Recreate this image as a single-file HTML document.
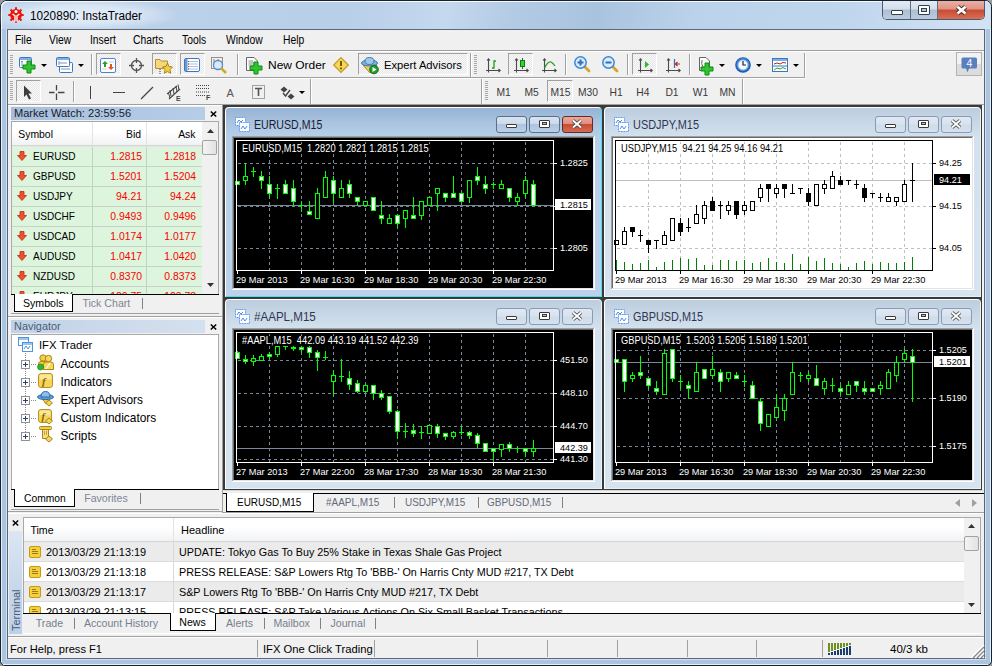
<!DOCTYPE html><html><head><meta charset="utf-8"><style>
html,body{margin:0;padding:0;}
body{width:992px;height:666px;overflow:hidden;background:#fff;}
#root{position:relative;width:992px;height:666px;overflow:hidden;font-family:"Liberation Sans",sans-serif;}
.t{position:absolute;white-space:nowrap;}
svg{overflow:visible;}
</style></head><body><div id="root">
<div style="position:absolute;left:0px;top:0px;width:992px;height:666px;background:#fff;"></div>
<div style="position:absolute;left:0px;top:0px;width:992px;height:666px;background:#9a9a9a;"></div>
<div style="position:absolute;left:0px;top:0px;width:992px;height:666px;box-sizing:border-box;border:1px solid #18222e;border-radius:7px 7px 5px 5px;background:#abc5e1;"></div>
<div style="position:absolute;left:1px;top:28px;width:1px;height:634px;background:#e6f0fb;"></div>
<div style="position:absolute;left:990px;top:28px;width:1px;height:634px;background:#e6f0fb;"></div>
<div style="position:absolute;left:3px;top:664px;width:985px;height:1px;background:#e6f0fb;"></div>
<div style="position:absolute;left:6px;top:28px;width:1px;height:632px;background:#d0e0f1;"></div>
<div style="position:absolute;left:985px;top:28px;width:1px;height:632px;background:#d0e0f1;"></div>
<div style="position:absolute;left:6px;top:659px;width:980px;height:1px;background:#d0e0f1;"></div>
<div style="position:absolute;left:1px;top:1px;width:990px;height:28px;border-radius:6px 6px 0 0;box-shadow:inset 1px 1px 0 rgba(255,255,255,0.85);background:linear-gradient(100deg,#bdd2ea 0%,#b9cfe8 35%,#c4d8ee 45%,#b3cae4 52%,#a9c3df 60%,#bcd2ea 70%,#c0d6ed 85%,#d3e3f4 100%);"></div>
<div style="position:absolute;left:0px;top:1px;width:180px;height:28px;background:radial-gradient(ellipse 55% 60% at 45% 50%,rgba(235,243,251,0.85) 0%,rgba(235,243,251,0.6) 55%,rgba(235,243,251,0) 100%);"></div>
<svg style="position:absolute;left:8px;top:7px;" width="16" height="16" viewBox="0 0 16 16"><g fill="#e8190f"><circle cx="8" cy="8" r="6"/>
<g stroke="#e8190f" stroke-width="2">
<line x1="8" y1="0.3" x2="8" y2="15.7"/><line x1="0.3" y1="8" x2="15.7" y2="8"/>
<line x1="2.5" y1="2.5" x2="13.5" y2="13.5"/><line x1="13.5" y1="2.5" x2="2.5" y2="13.5"/></g></g>
<circle cx="8" cy="4.5" r="1.5" fill="#fff"/>
<path d="M4.5 7 L7 8.8 L7 14.5 M11.5 7 L9 8.8 L9 14.5" stroke="#fff" stroke-width="1.4" fill="none"/></svg>
<div class="t " style="left:29.5px;top:10.00px;font-size:12.5px;line-height:12.5px;color:#000;transform:scaleX(0.94);transform-origin:0 0;">1020890: InstaTrader</div>
<div style="position:absolute;left:882px;top:1px;width:103px;height:19px;box-sizing:border-box;border:1px solid #4a5a6e;border-top:none;border-radius:0 0 5px 5px;overflow:hidden;background:#fff;"></div>
<div style="position:absolute;left:883px;top:1px;width:27px;height:18px;background:linear-gradient(180deg,#e3ebf4 0%,#d3deea 45%,#aebfd3 50%,#bccbdc 100%);border-radius:0 0 0 4px;"></div>
<div style="position:absolute;left:911px;top:1px;width:26px;height:18px;background:linear-gradient(180deg,#e3ebf4 0%,#d3deea 45%,#aebfd3 50%,#bccbdc 100%);"></div>
<div style="position:absolute;left:938px;top:1px;width:46px;height:18px;background:linear-gradient(180deg,#eab0a4 0%,#de9384 45%,#c94a32 50%,#d77056 100%);border-radius:0 0 4px 0;"></div>
<div style="position:absolute;left:910px;top:1px;width:1px;height:18px;background:#5d6c7e;"></div>
<div style="position:absolute;left:937px;top:1px;width:1px;height:18px;background:#5d6c7e;"></div>
<div style="position:absolute;left:891px;top:10px;width:12px;height:5px;box-sizing:border-box;border:1px solid #33404f;background:#fff;border-radius:1px;"></div>
<div style="position:absolute;left:918px;top:5px;width:12px;height:10px;box-sizing:border-box;border:1px solid #33404f;background:#fff;border-radius:1px;"></div>
<div style="position:absolute;left:921px;top:8px;width:6px;height:4px;box-sizing:border-box;border:1px solid #33404f;background:#b6c5d6;"></div>
<svg style="position:absolute;left:955px;top:5px;" width="13" height="10" viewBox="0 0 13 10"><path d="M2.5 1.8 L10.5 8.5 M10.5 1.8 L2.5 8.5" stroke="#4a2a24" stroke-width="4.6"/><path d="M2.5 1.8 L10.5 8.5 M10.5 1.8 L2.5 8.5" stroke="#fff" stroke-width="2.8"/></svg>
<div style="position:absolute;left:7px;top:29px;width:978px;height:630px;box-sizing:border-box;border:1px solid #5a6877;background:#f0f0f0;"></div>
<div class="t " style="left:15px;top:34.00px;font-size:12px;line-height:12px;color:#000;transform:scaleX(0.86);transform-origin:0 0;">File</div>
<div class="t " style="left:49px;top:34.00px;font-size:12px;line-height:12px;color:#000;transform:scaleX(0.86);transform-origin:0 0;">View</div>
<div class="t " style="left:90px;top:34.00px;font-size:12px;line-height:12px;color:#000;transform:scaleX(0.86);transform-origin:0 0;">Insert</div>
<div class="t " style="left:133px;top:34.00px;font-size:12px;line-height:12px;color:#000;transform:scaleX(0.86);transform-origin:0 0;">Charts</div>
<div class="t " style="left:182px;top:34.00px;font-size:12px;line-height:12px;color:#000;transform:scaleX(0.86);transform-origin:0 0;">Tools</div>
<div class="t " style="left:226px;top:34.00px;font-size:12px;line-height:12px;color:#000;transform:scaleX(0.86);transform-origin:0 0;">Window</div>
<div class="t " style="left:283px;top:34.00px;font-size:12px;line-height:12px;color:#000;transform:scaleX(0.86);transform-origin:0 0;">Help</div>
<div style="position:absolute;left:8px;top:50px;width:976px;height:1px;background:#a0a0a0;"></div>
<div style="position:absolute;left:8px;top:51px;width:976px;height:1px;background:#fff;"></div>
<div style="position:absolute;left:8px;top:77px;width:797px;height:1px;background:#a0a0a0;"></div>
<div style="position:absolute;left:8px;top:78px;width:797px;height:1px;background:#fff;"></div>
<svg style="position:absolute;left:10px;top:55px;" width="3" height="19" viewBox="0 0 3 19"><rect x="0" y="0" width="3" height="1" fill="#a8a8a8"/><rect x="0" y="2" width="3" height="1" fill="#a8a8a8"/><rect x="0" y="4" width="3" height="1" fill="#a8a8a8"/><rect x="0" y="6" width="3" height="1" fill="#a8a8a8"/><rect x="0" y="8" width="3" height="1" fill="#a8a8a8"/><rect x="0" y="10" width="3" height="1" fill="#a8a8a8"/><rect x="0" y="12" width="3" height="1" fill="#a8a8a8"/><rect x="0" y="14" width="3" height="1" fill="#a8a8a8"/><rect x="0" y="16" width="3" height="1" fill="#a8a8a8"/><rect x="0" y="18" width="3" height="1" fill="#a8a8a8"/></svg>
<svg style="position:absolute;left:19px;top:57px;" width="18" height="16" viewBox="0 0 18 16"><rect x="0.5" y="0.5" width="12" height="10" rx="1" fill="#fff" stroke="#3b78c2"/>
<rect x="1" y="1" width="11" height="2" fill="#7eaee6"/>
<path d="M3 4 V9 M2 5 L3 4 L4 5" stroke="#7c97b3" fill="none"/>
<path d="M8 4 H12 V8 H16 V12 H12 V16 H8 V12 H4 V8 H8 Z" fill="#2fc52f" stroke="#0f8a0f"/></svg>
<svg style="position:absolute;left:41px;top:64px;" width="6" height="3" viewBox="0 0 6 3"><path d="M0 0 H6 L3 3 Z" fill="#000"/></svg>
<svg style="position:absolute;left:56px;top:57px;" width="18" height="17" viewBox="0 0 18 17"><rect x="3.5" y="5.5" width="13" height="10" rx="1" fill="#fff" stroke="#3b78c2"/>
<rect x="0.5" y="0.5" width="13" height="9" rx="1" fill="#fff" stroke="#3b78c2"/>
<rect x="1" y="1" width="12" height="2" fill="#7eaee6"/>
<path d="M3 4 V8 M3 6 H11 M5 12 H14" stroke="#7c97b3" fill="none"/></svg>
<svg style="position:absolute;left:78px;top:64px;" width="6" height="3" viewBox="0 0 6 3"><path d="M0 0 H6 L3 3 Z" fill="#000"/></svg>
<div style="position:absolute;left:91px;top:54px;width:1px;height:21px;background:#a0a0a0;"></div>
<div style="position:absolute;left:92px;top:54px;width:1px;height:21px;background:#fff;"></div>
<div style="position:absolute;left:96px;top:53px;width:25px;height:22px;box-sizing:border-box;border-top:1px solid #a0a0a0;border-left:1px solid #a0a0a0;border-bottom:1px solid #fff;border-right:1px solid #fff;background:repeating-conic-gradient(#fafafa 0 25%,#e6e6e6 0 50%) 0 0/2px 2px;"></div>
<svg style="position:absolute;left:100px;top:58px;" width="16" height="15" viewBox="0 0 16 15"><rect x="0.5" y="0.5" width="15" height="14" rx="1.5" fill="#fff" stroke="#4a86cf"/>
<path d="M5 3 L8 6 H6 V9 H4 V6 H2 Z" fill="#2a9d2a"/>
<path d="M11 12 L14 9 H12 V6 H10 V9 H8 Z" fill="#e2571e"/>
<path d="M9 4 H14 M2 11 H7" stroke="#ccc"/></svg>
<svg style="position:absolute;left:129px;top:58px;" width="15" height="15" viewBox="0 0 15 15"><circle cx="7.5" cy="7.5" r="5" fill="none" stroke="#555" stroke-width="1.3"/>
<path d="M7.5 0 V5 M7.5 10 V15 M0 7.5 H5 M10 7.5 H15" stroke="#555" stroke-width="1.3"/></svg>
<div style="position:absolute;left:152px;top:53px;width:25px;height:22px;box-sizing:border-box;border-top:1px solid #a0a0a0;border-left:1px solid #a0a0a0;border-bottom:1px solid #fff;border-right:1px solid #fff;background:repeating-conic-gradient(#fafafa 0 25%,#e6e6e6 0 50%) 0 0/2px 2px;"></div>
<svg style="position:absolute;left:155px;top:57px;" width="18" height="17" viewBox="0 0 18 17"><path d="M0.5 2.5 H5 L6.5 4 H12.5 V11.5 H0.5 Z" fill="#f3d77a" stroke="#b8902a"/>
<path d="M12.5 6 L14 9.5 L17.5 10 L15 12.5 L15.6 16.3 L12.5 14.5 L9.4 16.3 L10 12.5 L7.5 10 L11 9.5 Z" fill="#f2cf3d" stroke="#a98417"/>
<path d="M5 12 V17" stroke="#333" stroke-dasharray="1 1"/></svg>
<div style="position:absolute;left:180px;top:53px;width:25px;height:22px;box-sizing:border-box;border-top:1px solid #a0a0a0;border-left:1px solid #a0a0a0;border-bottom:1px solid #fff;border-right:1px solid #fff;background:repeating-conic-gradient(#fafafa 0 25%,#e6e6e6 0 50%) 0 0/2px 2px;"></div>
<svg style="position:absolute;left:184px;top:58px;" width="16" height="14" viewBox="0 0 16 14"><rect x="0.5" y="0.5" width="15" height="13" rx="1.5" fill="#fff" stroke="#3b78c2"/>
<rect x="1" y="1" width="2.5" height="12" fill="#6b98cf"/>
<path d="M5 3.5 H14 M5 6 H14 M5 8.5 H14 M5 11 H14" stroke="#a9c3e3"/>
<path d="M4 3.5 H5 M4 8.5 H5" stroke="#e21"/><path d="M4 6 H5 M4 11 H5" stroke="#222"/></svg>
<svg style="position:absolute;left:211px;top:57px;" width="19" height="18" viewBox="0 0 19 18"><rect x="0.5" y="0.5" width="11" height="11" fill="#f2efe8" stroke="#9a8f80"/>
<path d="M3 2 V9 M7 2 V9" stroke="#888"/>
<circle cx="7" cy="8" r="4.5" fill="#dbe9f7" stroke="#4d8fd6" stroke-width="1.3"/>
<path d="M10 11 L15 16" stroke="#d4a92a" stroke-width="2.5"/></svg>
<div style="position:absolute;left:237px;top:54px;width:1px;height:21px;background:#a0a0a0;"></div>
<div style="position:absolute;left:238px;top:54px;width:1px;height:21px;background:#fff;"></div>
<svg style="position:absolute;left:246px;top:57px;" width="18" height="18" viewBox="0 0 18 18"><path d="M0.5 0.5 H8 L11.5 4 V13.5 H0.5 Z" fill="#fff" stroke="#666"/>
<path d="M2.5 4 H7 M2.5 6 H9 M2.5 8 H9" stroke="#888"/>
<path d="M8 5 H12 V9 H16 V13 H12 V17 H8 V13 H4 V9 H8 Z" fill="#2fc52f" stroke="#0f8a0f"/></svg>
<div class="t " style="left:267.8px;top:60.00px;font-size:11.5px;line-height:11.5px;color:#000;transform:scaleX(1.04);transform-origin:0 0;">New Order</div>
<svg style="position:absolute;left:333px;top:57px;" width="16" height="16" viewBox="0 0 16 16"><path d="M8 0.7 L15.3 8 L8 15.3 L0.7 8 Z" fill="#f5d55a" stroke="#c79a1a" stroke-width="1.2"/>
<path d="M8 4 V9" stroke="#6b4a00" stroke-width="1.8"/><rect x="7.1" y="10.5" width="1.8" height="1.8" fill="#6b4a00"/></svg>
<div style="position:absolute;left:358px;top:53px;width:110px;height:22px;box-sizing:border-box;border-top:1px solid #a0a0a0;border-left:1px solid #a0a0a0;border-bottom:1px solid #fff;border-right:1px solid #fff;background:repeating-conic-gradient(#fafafa 0 25%,#e6e6e6 0 50%) 0 0/2px 2px;"></div>
<svg style="position:absolute;left:361px;top:57px;" width="18" height="17" viewBox="0 0 18 17"><path d="M2 8 L9 16 L16 8 Z" fill="#f1cf55" stroke="#b08a1c"/>
<ellipse cx="8.5" cy="6" rx="8" ry="3" fill="#7fb2dd" stroke="#3f78ad"/>
<ellipse cx="8.5" cy="4" rx="4.5" ry="3.5" fill="#9cc6ea" stroke="#3f78ad"/>
<circle cx="13" cy="12.5" r="4.3" fill="#1e9d2e" stroke="#0c6b17"/>
<path d="M11.5 10 L15.5 12.5 L11.5 15 Z" fill="#fff"/></svg>
<div class="t " style="left:383.5px;top:60.00px;font-size:11.1px;line-height:11.1px;color:#000;transform:scaleX(1.01);transform-origin:0 0;">Expert Advisors</div>
<div style="position:absolute;left:470px;top:53px;width:1px;height:24px;background:#a0a0a0;"></div>
<div style="position:absolute;left:471px;top:53px;width:1px;height:24px;background:#fff;"></div>
<svg style="position:absolute;left:474px;top:55px;" width="3" height="19" viewBox="0 0 3 19"><rect x="0" y="0" width="3" height="1" fill="#a8a8a8"/><rect x="0" y="2" width="3" height="1" fill="#a8a8a8"/><rect x="0" y="4" width="3" height="1" fill="#a8a8a8"/><rect x="0" y="6" width="3" height="1" fill="#a8a8a8"/><rect x="0" y="8" width="3" height="1" fill="#a8a8a8"/><rect x="0" y="10" width="3" height="1" fill="#a8a8a8"/><rect x="0" y="12" width="3" height="1" fill="#a8a8a8"/><rect x="0" y="14" width="3" height="1" fill="#a8a8a8"/><rect x="0" y="16" width="3" height="1" fill="#a8a8a8"/><rect x="0" y="18" width="3" height="1" fill="#a8a8a8"/></svg>
<svg style="position:absolute;left:486px;top:58px;" width="15" height="15" viewBox="0 0 15 15"><path d="M2.5 0.5 V14.5 M0 12.5 H14.5 M1 2.5 L2.5 0.8 L4 2.5 M12.5 11 L14.2 12.5 L12.5 14" stroke="#4a4a4a" stroke-width="1.1" fill="none"/><path d="M6 10 H8 V3 H10" stroke="#1f9a1f" stroke-width="1.3" fill="none"/></svg>
<div style="position:absolute;left:508px;top:53px;width:25px;height:22px;box-sizing:border-box;border-top:1px solid #a0a0a0;border-left:1px solid #a0a0a0;border-bottom:1px solid #fff;border-right:1px solid #fff;background:repeating-conic-gradient(#fafafa 0 25%,#e6e6e6 0 50%) 0 0/2px 2px;"></div>
<svg style="position:absolute;left:514px;top:58px;" width="15" height="15" viewBox="0 0 15 15"><path d="M2.5 0.5 V14.5 M0 12.5 H14.5 M1 2.5 L2.5 0.8 L4 2.5 M12.5 11 L14.2 12.5 L12.5 14" stroke="#4a4a4a" stroke-width="1.1" fill="none"/><path d="M8.5 0 V11" stroke="#1f7a1f"/><rect x="6.5" y="2.5" width="4" height="6" fill="#2bd92b" stroke="#157a15"/></svg>
<svg style="position:absolute;left:542px;top:58px;" width="15" height="15" viewBox="0 0 15 15"><path d="M2.5 0.5 V14.5 M0 12.5 H14.5 M1 2.5 L2.5 0.8 L4 2.5 M12.5 11 L14.2 12.5 L12.5 14" stroke="#4a4a4a" stroke-width="1.1" fill="none"/><path d="M2.5 10 Q6 3 9 4 Q11 5 13 8" stroke="#2a9d2a" stroke-width="1.3" fill="none"/></svg>
<div style="position:absolute;left:565px;top:54px;width:1px;height:21px;background:#a0a0a0;"></div>
<div style="position:absolute;left:566px;top:54px;width:1px;height:21px;background:#fff;"></div>
<svg style="position:absolute;left:574px;top:56px;" width="17" height="17" viewBox="0 0 17 17"><path d="M9.5 9.5 L15 15" stroke="#d2a628" stroke-width="2.8" stroke-linecap="round"/>
<circle cx="6.5" cy="6.5" r="5.7" fill="#dcebf9" stroke="#3a86d6" stroke-width="1.5"/>
<path d="M6.5 3.5 V9.5 M3.5 6.5 H9.5" stroke="#2f6fb8" stroke-width="2"/></svg>
<svg style="position:absolute;left:602px;top:56px;" width="17" height="17" viewBox="0 0 17 17"><path d="M9.5 9.5 L15 15" stroke="#d2a628" stroke-width="2.8" stroke-linecap="round"/>
<circle cx="6.5" cy="6.5" r="5.7" fill="#dcebf9" stroke="#3a86d6" stroke-width="1.5"/>
<path d="M3.5 6.5 H9.5" stroke="#2f6fb8" stroke-width="2"/></svg>
<div style="position:absolute;left:627px;top:54px;width:1px;height:21px;background:#a0a0a0;"></div>
<div style="position:absolute;left:628px;top:54px;width:1px;height:21px;background:#fff;"></div>
<div style="position:absolute;left:632px;top:53px;width:25px;height:22px;box-sizing:border-box;border-top:1px solid #a0a0a0;border-left:1px solid #a0a0a0;border-bottom:1px solid #fff;border-right:1px solid #fff;background:repeating-conic-gradient(#fafafa 0 25%,#e6e6e6 0 50%) 0 0/2px 2px;"></div>
<svg style="position:absolute;left:638px;top:58px;" width="15" height="15" viewBox="0 0 15 15"><path d="M2.5 0.5 V14.5 M0 12.5 H14.5 M1 2.5 L2.5 0.8 L4 2.5 M12.5 11 L14.2 12.5 L12.5 14" stroke="#4a4a4a" stroke-width="1.1" fill="none"/><path d="M7 3 L11 6.5 L7 10 Z" fill="#2bb82b"/></svg>
<svg style="position:absolute;left:666px;top:58px;" width="15" height="15" viewBox="0 0 15 15"><path d="M2.5 0.5 V14.5 M0 12.5 H14.5 M1 2.5 L2.5 0.8 L4 2.5 M12.5 11 L14.2 12.5 L12.5 14" stroke="#4a4a4a" stroke-width="1.1" fill="none"/><path d="M8.5 1 V10" stroke="#2a6fc0" stroke-width="1.2"/><path d="M14 6 H10 M11.5 4 L9.5 6 L11.5 8" stroke="#cc2200" stroke-width="1.2" fill="none"/></svg>
<div style="position:absolute;left:689px;top:54px;width:1px;height:21px;background:#a0a0a0;"></div>
<div style="position:absolute;left:690px;top:54px;width:1px;height:21px;background:#fff;"></div>
<svg style="position:absolute;left:699px;top:57px;" width="16" height="18" viewBox="0 0 16 18"><path d="M0.5 0.5 H7 L10.5 4 V13.5 H0.5 Z" fill="#fff" stroke="#666"/>
<path d="M3 3 Q2 7 4 10" stroke="#666" fill="none"/>
<path d="M6 6 H10 V10 H14 V14 H10 V18 H6 V14 H2 V10 H6 Z" fill="#2fc52f" stroke="#0f8a0f"/></svg>
<svg style="position:absolute;left:719px;top:64px;" width="6" height="3" viewBox="0 0 6 3"><path d="M0 0 H6 L3 3 Z" fill="#000"/></svg>
<svg style="position:absolute;left:735px;top:57px;" width="16" height="16" viewBox="0 0 16 16"><circle cx="8" cy="8" r="7.8" fill="#1b5cae"/><circle cx="8" cy="7.6" r="6.6" fill="#3f86d8"/><circle cx="8" cy="8" r="4.9" fill="#f6f9fd" stroke="#9cc0ea" stroke-width="0.8"/>
<path d="M8 4 V8 H11" stroke="#222" stroke-width="1.2" fill="none"/></svg>
<svg style="position:absolute;left:756px;top:64px;" width="6" height="3" viewBox="0 0 6 3"><path d="M0 0 H6 L3 3 Z" fill="#000"/></svg>
<svg style="position:absolute;left:772px;top:58px;" width="16" height="14" viewBox="0 0 16 14"><rect x="0.5" y="0.5" width="15" height="13" fill="#fff" stroke="#3b78c2"/>
<rect x="1" y="1" width="14" height="2" fill="#7eaee6"/><path d="M1 8 H15" stroke="#3b78c2"/>
<path d="M2 6 L5 5 L8 6 L11 4.5 L14 5" stroke="#b22" fill="none"/>
<path d="M2 12 L5 10 L8 11 L11 9.5 L14 11" stroke="#2a2" fill="none"/></svg>
<svg style="position:absolute;left:793px;top:64px;" width="6" height="3" viewBox="0 0 6 3"><path d="M0 0 H6 L3 3 Z" fill="#000"/></svg>
<div style="position:absolute;left:804px;top:53px;width:1px;height:24px;background:#a0a0a0;"></div>
<div style="position:absolute;left:805px;top:53px;width:1px;height:24px;background:#fff;"></div>
<div style="position:absolute;left:956px;top:52px;width:26px;height:24px;box-sizing:border-box;border:1px solid #b3b3b3;background:linear-gradient(180deg,#f2f2f2 0 50%,#dcdcdc 50% 100%);"></div>
<svg style="position:absolute;left:961px;top:57px;" width="17" height="17" viewBox="0 0 17 17"><path d="M2 0.5 H14.5 Q16 0.5 16 2 V10 Q16 11.5 14.5 11.5 H8 L6.5 15.5 L5 11.5 H2 Q0.5 11.5 0.5 10 V2 Q0.5 0.5 2 0.5 Z" fill="#5b7fbd"/><text x="8.3" y="9.6" font-size="10.5" fill="#fff" text-anchor="middle" font-family="Liberation Sans">4</text></svg>
<svg style="position:absolute;left:10px;top:81px;" width="3" height="20" viewBox="0 0 3 20"><rect x="0" y="0" width="3" height="1" fill="#a8a8a8"/><rect x="0" y="2" width="3" height="1" fill="#a8a8a8"/><rect x="0" y="4" width="3" height="1" fill="#a8a8a8"/><rect x="0" y="6" width="3" height="1" fill="#a8a8a8"/><rect x="0" y="8" width="3" height="1" fill="#a8a8a8"/><rect x="0" y="10" width="3" height="1" fill="#a8a8a8"/><rect x="0" y="12" width="3" height="1" fill="#a8a8a8"/><rect x="0" y="14" width="3" height="1" fill="#a8a8a8"/><rect x="0" y="16" width="3" height="1" fill="#a8a8a8"/><rect x="0" y="18" width="3" height="1" fill="#a8a8a8"/></svg>
<div style="position:absolute;left:16px;top:80px;width:25px;height:22px;box-sizing:border-box;border-top:1px solid #a0a0a0;border-left:1px solid #a0a0a0;border-bottom:1px solid #fff;border-right:1px solid #fff;background:repeating-conic-gradient(#fafafa 0 25%,#e6e6e6 0 50%) 0 0/2px 2px;"></div>
<svg style="position:absolute;left:23px;top:85px;" width="10" height="15" viewBox="0 0 10 15"><path d="M1 0.5 L9 8.5 L5.5 8.5 L8 13.5 L6 14.5 L3.5 9.5 L1 12 Z" fill="#3c3c3c"/></svg>
<svg style="position:absolute;left:49px;top:85px;" width="16" height="15" viewBox="0 0 16 15"><path d="M7.5 0 V5.5 M7.5 8.5 V15 M0 7.5 H5.5 M9 7.5 H15.5" stroke="#444" stroke-width="1.3"/></svg>
<div style="position:absolute;left:73px;top:81px;width:1px;height:21px;background:#a0a0a0;"></div>
<div style="position:absolute;left:74px;top:81px;width:1px;height:21px;background:#fff;"></div>
<div style="position:absolute;left:90px;top:86px;width:1px;height:13px;background:#444;"></div>
<div style="position:absolute;left:113px;top:92px;width:12px;height:1px;background:#444;"></div>
<svg style="position:absolute;left:140px;top:86px;" width="14" height="14" viewBox="0 0 14 14"><path d="M1 13 L13 1" stroke="#444" stroke-width="1.2"/></svg>
<svg style="position:absolute;left:166px;top:84px;" width="17" height="18" viewBox="0 0 17 18"><path d="M1 10 L11 2 M3 15 L14 5" stroke="#444" stroke-width="1.1" fill="none"/>
<path d="M4 6 L5 12 M7 4 L8 10 M10 2 L11 8 M2.5 9 L4 14" stroke="#444" stroke-width="1" fill="none"/>
<path d="M12 0.5 L13 6" stroke="#444"/>
<text x="10" y="17" font-size="7" font-weight="bold" fill="#444" font-family="Liberation Sans">E</text></svg>
<svg style="position:absolute;left:196px;top:85px;" width="15" height="16" viewBox="0 0 15 16"><path d="M0 0.5 H13 M0 3.5 H13 M0 7 H13 M0 10.5 H10" stroke="#444" stroke-dasharray="1 1" fill="none"/>
<text x="10" y="15" font-size="7" font-weight="bold" fill="#444" font-family="Liberation Sans">F</text></svg>
<div class="t " style="left:226.5px;top:88.00px;font-size:11px;line-height:11px;color:#555;">A</div>
<svg style="position:absolute;left:252px;top:85px;" width="14" height="14" viewBox="0 0 14 14"><rect x="0.5" y="0.5" width="12" height="13" fill="none" stroke="#555" stroke-dasharray="1 1"/>
<path d="M3 3.5 H10 M6.5 3.5 V11" stroke="#555" stroke-width="1.6"/></svg>
<svg style="position:absolute;left:280px;top:86px;" width="15" height="14" viewBox="0 0 15 14"><path d="M4 0.5 L7.5 3.5 L4 6.5 L0.5 3.5 Z M11 7.5 L14.5 10.5 L11 13.5 L7.5 10.5 Z" fill="#444"/>
<path d="M3 7 L5.5 10 L10 4" stroke="#444" stroke-width="1.4" fill="none"/></svg>
<svg style="position:absolute;left:299px;top:91px;" width="6" height="3" viewBox="0 0 6 3"><path d="M0 0 H6 L3 3 Z" fill="#000"/></svg>
<div style="position:absolute;left:310px;top:79px;width:1px;height:25px;background:#a0a0a0;"></div>
<div style="position:absolute;left:311px;top:79px;width:1px;height:25px;background:#fff;"></div>
<div style="position:absolute;left:481px;top:79px;width:1px;height:25px;background:#a0a0a0;"></div>
<div style="position:absolute;left:482px;top:79px;width:1px;height:25px;background:#fff;"></div>
<svg style="position:absolute;left:485px;top:81px;" width="3" height="20" viewBox="0 0 3 20"><rect x="0" y="0" width="3" height="1" fill="#a8a8a8"/><rect x="0" y="2" width="3" height="1" fill="#a8a8a8"/><rect x="0" y="4" width="3" height="1" fill="#a8a8a8"/><rect x="0" y="6" width="3" height="1" fill="#a8a8a8"/><rect x="0" y="8" width="3" height="1" fill="#a8a8a8"/><rect x="0" y="10" width="3" height="1" fill="#a8a8a8"/><rect x="0" y="12" width="3" height="1" fill="#a8a8a8"/><rect x="0" y="14" width="3" height="1" fill="#a8a8a8"/><rect x="0" y="16" width="3" height="1" fill="#a8a8a8"/><rect x="0" y="18" width="3" height="1" fill="#a8a8a8"/></svg>
<div style="position:absolute;left:547px;top:80px;width:26px;height:22px;box-sizing:border-box;border-top:1px solid #a0a0a0;border-left:1px solid #a0a0a0;border-bottom:1px solid #fff;border-right:1px solid #fff;background:repeating-conic-gradient(#fafafa 0 25%,#e6e6e6 0 50%) 0 0/2px 2px;"></div>
<div class="t " style="left:496.5px;top:88.00px;font-size:10.3px;line-height:10.3px;color:#3a3a3a;">M1</div>
<div class="t " style="left:524.5px;top:88.00px;font-size:10.3px;line-height:10.3px;color:#3a3a3a;">M5</div>
<div class="t " style="left:550.5px;top:88.00px;font-size:10.3px;line-height:10.3px;color:#3a3a3a;">M15</div>
<div class="t " style="left:578px;top:88.00px;font-size:10.3px;line-height:10.3px;color:#3a3a3a;">M30</div>
<div class="t " style="left:609.5px;top:88.00px;font-size:10.3px;line-height:10.3px;color:#3a3a3a;">H1</div>
<div class="t " style="left:636.3px;top:88.00px;font-size:10.3px;line-height:10.3px;color:#3a3a3a;">H4</div>
<div class="t " style="left:665.4px;top:88.00px;font-size:10.3px;line-height:10.3px;color:#3a3a3a;">D1</div>
<div class="t " style="left:692.8px;top:88.00px;font-size:10.3px;line-height:10.3px;color:#3a3a3a;">W1</div>
<div class="t " style="left:719.5px;top:88.00px;font-size:10.3px;line-height:10.3px;color:#3a3a3a;">MN</div>
<div style="position:absolute;left:742px;top:79px;width:1px;height:25px;background:#a0a0a0;"></div>
<div style="position:absolute;left:743px;top:79px;width:1px;height:25px;background:#fff;"></div>
<div style="position:absolute;left:8px;top:104px;width:215px;height:1px;background:#a0a0a0;"></div>
<div style="position:absolute;left:8px;top:105px;width:215px;height:1px;background:#fff;"></div>
<div style="position:absolute;left:11px;top:107px;width:194px;height:13px;background:linear-gradient(90deg,#a6bedb,#b0c8e3 60%,#b5cde7);"></div>
<div class="t " style="left:13.5px;top:109.00px;font-size:10.4px;line-height:10.4px;color:#1a1a2a;transform:scaleX(1.065);transform-origin:0 0;">Market Watch: 23:59:56</div>
<svg style="position:absolute;left:210px;top:111px;" width="7" height="6" viewBox="0 0 7 6"><path d="M0.8 0.5 L6.2 5.5 M6.2 0.5 L0.8 5.5" stroke="#000" stroke-width="1.5"/></svg>
<div style="position:absolute;left:11px;top:121px;width:208px;height:173px;box-sizing:border-box;border:1px solid #a9a9a9;border-bottom:none;background:#fff;"></div>
<div style="position:absolute;left:12px;top:122px;width:190px;height:23px;background:linear-gradient(180deg,#ffffff 0%,#ffffff 40%,#f1f2f4 100%);"></div>
<div style="position:absolute;left:12px;top:145px;width:190px;height:1px;background:#d5d5d5;"></div>
<div style="position:absolute;left:12px;top:146px;width:190px;height:1px;background:#e6e6e6;"></div>
<div style="position:absolute;left:92px;top:122px;width:1px;height:23px;background:#e3e3e3;"></div>
<div style="position:absolute;left:146px;top:122px;width:1px;height:23px;background:#e3e3e3;"></div>
<div class="t " style="left:18.3px;top:130.00px;font-size:10.4px;line-height:10.4px;color:#000;">Symbol</div>
<div class="t " style="right:851px;top:130.00px;font-size:10.4px;line-height:10.4px;color:#000;">Bid</div>
<div class="t " style="right:796.5px;top:130.00px;font-size:10.4px;line-height:10.4px;color:#000;">Ask</div>
<div style="position:absolute;left:12px;top:147px;width:190px;height:147px;overflow:hidden;">
<div style="position:absolute;left:0;top:0px;width:190px;height:20px;background:#dcf5dc;box-shadow:inset 0 -1px 0 #c8d2c8;"></div>
<div style="position:absolute;left:80px;top:0px;width:1px;height:20px;background:#c5cfc5;"></div>
<div style="position:absolute;left:134px;top:0px;width:1px;height:20px;background:#c5cfc5;"></div>
<svg style="position:absolute;left:5px;top:4px" width="10" height="10" viewBox="0 0 10 10"><path d="M3 0.5 H7 V4.5 H9.5 L5 9.5 L0.5 4.5 H3 Z" fill="#f0502a" stroke="#b8301a" stroke-width="0.8"/></svg>
<div class="t" style="left:20.6px;top:5px;font-size:10.4px;line-height:10.4px;color:#000;transform:scaleX(0.97);transform-origin:0 0;">EURUSD</div>
<div class="t" style="right:60px;top:5px;font-size:10.4px;line-height:10.4px;color:#f00;">1.2815</div>
<div class="t" style="right:6px;top:5px;font-size:10.4px;line-height:10.4px;color:#f00;">1.2818</div>
<div style="position:absolute;left:0;top:20px;width:190px;height:20px;background:#dcf5dc;box-shadow:inset 0 -1px 0 #c8d2c8;"></div>
<div style="position:absolute;left:80px;top:20px;width:1px;height:20px;background:#c5cfc5;"></div>
<div style="position:absolute;left:134px;top:20px;width:1px;height:20px;background:#c5cfc5;"></div>
<svg style="position:absolute;left:5px;top:24px" width="10" height="10" viewBox="0 0 10 10"><path d="M3 0.5 H7 V4.5 H9.5 L5 9.5 L0.5 4.5 H3 Z" fill="#f0502a" stroke="#b8301a" stroke-width="0.8"/></svg>
<div class="t" style="left:20.6px;top:25px;font-size:10.4px;line-height:10.4px;color:#000;transform:scaleX(0.97);transform-origin:0 0;">GBPUSD</div>
<div class="t" style="right:60px;top:25px;font-size:10.4px;line-height:10.4px;color:#f00;">1.5201</div>
<div class="t" style="right:6px;top:25px;font-size:10.4px;line-height:10.4px;color:#f00;">1.5204</div>
<div style="position:absolute;left:0;top:40px;width:190px;height:20px;background:#dcf5dc;box-shadow:inset 0 -1px 0 #c8d2c8;"></div>
<div style="position:absolute;left:80px;top:40px;width:1px;height:20px;background:#c5cfc5;"></div>
<div style="position:absolute;left:134px;top:40px;width:1px;height:20px;background:#c5cfc5;"></div>
<svg style="position:absolute;left:5px;top:44px" width="10" height="10" viewBox="0 0 10 10"><path d="M3 0.5 H7 V4.5 H9.5 L5 9.5 L0.5 4.5 H3 Z" fill="#f0502a" stroke="#b8301a" stroke-width="0.8"/></svg>
<div class="t" style="left:20.6px;top:45px;font-size:10.4px;line-height:10.4px;color:#000;transform:scaleX(0.97);transform-origin:0 0;">USDJPY</div>
<div class="t" style="right:60px;top:45px;font-size:10.4px;line-height:10.4px;color:#f00;">94.21</div>
<div class="t" style="right:6px;top:45px;font-size:10.4px;line-height:10.4px;color:#f00;">94.24</div>
<div style="position:absolute;left:0;top:60px;width:190px;height:20px;background:#dcf5dc;box-shadow:inset 0 -1px 0 #c8d2c8;"></div>
<div style="position:absolute;left:80px;top:60px;width:1px;height:20px;background:#c5cfc5;"></div>
<div style="position:absolute;left:134px;top:60px;width:1px;height:20px;background:#c5cfc5;"></div>
<svg style="position:absolute;left:5px;top:64px" width="10" height="10" viewBox="0 0 10 10"><path d="M3 0.5 H7 V4.5 H9.5 L5 9.5 L0.5 4.5 H3 Z" fill="#f0502a" stroke="#b8301a" stroke-width="0.8"/></svg>
<div class="t" style="left:20.6px;top:65px;font-size:10.4px;line-height:10.4px;color:#000;transform:scaleX(0.97);transform-origin:0 0;">USDCHF</div>
<div class="t" style="right:60px;top:65px;font-size:10.4px;line-height:10.4px;color:#f00;">0.9493</div>
<div class="t" style="right:6px;top:65px;font-size:10.4px;line-height:10.4px;color:#f00;">0.9496</div>
<div style="position:absolute;left:0;top:80px;width:190px;height:20px;background:#dcf5dc;box-shadow:inset 0 -1px 0 #c8d2c8;"></div>
<div style="position:absolute;left:80px;top:80px;width:1px;height:20px;background:#c5cfc5;"></div>
<div style="position:absolute;left:134px;top:80px;width:1px;height:20px;background:#c5cfc5;"></div>
<svg style="position:absolute;left:5px;top:84px" width="10" height="10" viewBox="0 0 10 10"><path d="M3 0.5 H7 V4.5 H9.5 L5 9.5 L0.5 4.5 H3 Z" fill="#f0502a" stroke="#b8301a" stroke-width="0.8"/></svg>
<div class="t" style="left:20.6px;top:85px;font-size:10.4px;line-height:10.4px;color:#000;transform:scaleX(0.97);transform-origin:0 0;">USDCAD</div>
<div class="t" style="right:60px;top:85px;font-size:10.4px;line-height:10.4px;color:#f00;">1.0174</div>
<div class="t" style="right:6px;top:85px;font-size:10.4px;line-height:10.4px;color:#f00;">1.0177</div>
<div style="position:absolute;left:0;top:100px;width:190px;height:20px;background:#dcf5dc;box-shadow:inset 0 -1px 0 #c8d2c8;"></div>
<div style="position:absolute;left:80px;top:100px;width:1px;height:20px;background:#c5cfc5;"></div>
<div style="position:absolute;left:134px;top:100px;width:1px;height:20px;background:#c5cfc5;"></div>
<svg style="position:absolute;left:5px;top:104px" width="10" height="10" viewBox="0 0 10 10"><path d="M3 0.5 H7 V4.5 H9.5 L5 9.5 L0.5 4.5 H3 Z" fill="#f0502a" stroke="#b8301a" stroke-width="0.8"/></svg>
<div class="t" style="left:20.6px;top:105px;font-size:10.4px;line-height:10.4px;color:#000;transform:scaleX(0.97);transform-origin:0 0;">AUDUSD</div>
<div class="t" style="right:60px;top:105px;font-size:10.4px;line-height:10.4px;color:#f00;">1.0417</div>
<div class="t" style="right:6px;top:105px;font-size:10.4px;line-height:10.4px;color:#f00;">1.0420</div>
<div style="position:absolute;left:0;top:120px;width:190px;height:20px;background:#dcf5dc;box-shadow:inset 0 -1px 0 #c8d2c8;"></div>
<div style="position:absolute;left:80px;top:120px;width:1px;height:20px;background:#c5cfc5;"></div>
<div style="position:absolute;left:134px;top:120px;width:1px;height:20px;background:#c5cfc5;"></div>
<svg style="position:absolute;left:5px;top:124px" width="10" height="10" viewBox="0 0 10 10"><path d="M3 0.5 H7 V4.5 H9.5 L5 9.5 L0.5 4.5 H3 Z" fill="#f0502a" stroke="#b8301a" stroke-width="0.8"/></svg>
<div class="t" style="left:20.6px;top:125px;font-size:10.4px;line-height:10.4px;color:#000;transform:scaleX(0.97);transform-origin:0 0;">NZDUSD</div>
<div class="t" style="right:60px;top:125px;font-size:10.4px;line-height:10.4px;color:#f00;">0.8370</div>
<div class="t" style="right:6px;top:125px;font-size:10.4px;line-height:10.4px;color:#f00;">0.8373</div>
<div style="position:absolute;left:0;top:140px;width:190px;height:20px;background:#dcf5dc;box-shadow:inset 0 -1px 0 #c8d2c8;"></div>
<div style="position:absolute;left:80px;top:140px;width:1px;height:20px;background:#c5cfc5;"></div>
<div style="position:absolute;left:134px;top:140px;width:1px;height:20px;background:#c5cfc5;"></div>
<svg style="position:absolute;left:5px;top:144px" width="10" height="10" viewBox="0 0 10 10"><path d="M3 0.5 H7 V4.5 H9.5 L5 9.5 L0.5 4.5 H3 Z" fill="#f0502a" stroke="#b8301a" stroke-width="0.8"/></svg>
<div class="t" style="left:20.6px;top:145px;font-size:10.4px;line-height:10.4px;color:#000;transform:scaleX(0.97);transform-origin:0 0;">EURJPY</div>
<div class="t" style="right:60px;top:145px;font-size:10.4px;line-height:10.4px;color:#f00;">120.75</div>
<div class="t" style="right:6px;top:145px;font-size:10.4px;line-height:10.4px;color:#f00;">120.78</div>
</div>
<div style="position:absolute;left:202px;top:122px;width:16px;height:172px;background:#f0f0f0;"></div>
<svg style="position:absolute;left:207px;top:129px;" width="7" height="4" viewBox="0 0 7 4"><path d="M0 4 L3.5 0 L7 4 Z" fill="#333"/></svg>
<div style="position:absolute;left:202px;top:140px;width:15px;height:15px;box-sizing:border-box;border:1px solid #a2a2a2;border-radius:2px;background:linear-gradient(90deg,#f4f4f4,#e2e2e2);"></div>
<svg style="position:absolute;left:207px;top:283px;" width="7" height="4" viewBox="0 0 7 4"><path d="M0 0 L3.5 4 L7 0 Z" fill="#333"/></svg>
<div style="position:absolute;left:11px;top:294px;width:208px;height:19px;background:#f0f0f0;"></div>
<div style="position:absolute;left:11px;top:294px;width:208px;height:1px;background:#000;"></div>
<div style="position:absolute;left:14px;top:294px;width:59px;height:18px;box-sizing:border-box;border:1px solid #000;border-top:none;background:#fff;"></div>
<div class="t " style="left:23px;top:298.00px;font-size:10.6px;line-height:10.6px;color:#000;">Symbols</div>
<div class="t " style="left:82.4px;top:298.00px;font-size:10.6px;line-height:10.6px;color:#7d8796;">Tick Chart</div>
<div style="position:absolute;left:142px;top:298px;width:1px;height:11px;background:#808080;"></div>
<div style="position:absolute;left:11px;top:313px;width:208px;height:1px;background:#a0a0a0;"></div>
<div style="position:absolute;left:8px;top:316px;width:215px;height:1px;background:#a0a0a0;"></div>
<div style="position:absolute;left:8px;top:317px;width:215px;height:1px;background:#fff;"></div>
<div style="position:absolute;left:11px;top:320px;width:194px;height:13px;background:linear-gradient(90deg,#c0d1e6,#cddbec 60%,#d3e0ef);"></div>
<div class="t " style="left:13.5px;top:322.00px;font-size:10.4px;line-height:10.4px;color:#4a5d75;transform:scaleX(1.05);transform-origin:0 0;">Navigator</div>
<svg style="position:absolute;left:210px;top:324px;" width="7" height="6" viewBox="0 0 7 6"><path d="M0.8 0.5 L6.2 5.5 M6.2 0.5 L0.8 5.5" stroke="#000" stroke-width="1.5"/></svg>
<div style="position:absolute;left:11px;top:334px;width:208px;height:155px;box-sizing:border-box;border:1px solid #a9a9a9;border-bottom:none;background:#fff;"></div>
<svg style="position:absolute;left:18px;top:337px;" width="15" height="15" viewBox="0 0 15 15"><rect x="0.5" y="0.5" width="10" height="8" fill="#fff" stroke="#4e95e0"/><rect x="1" y="1" width="9" height="2" fill="#9cc4ee"/>
<rect x="4.5" y="5.5" width="10" height="9" fill="#fff" stroke="#4e95e0"/><rect x="5" y="6" width="9" height="2" fill="#9cc4ee"/>
<path d="M6 12 L8 9 L10 12 L12 9" stroke="#4e95e0" fill="none"/></svg>
<div class="t " style="left:38.9px;top:340.00px;font-size:11.3px;line-height:11.3px;color:#000;">IFX Trader</div>
<svg style="position:absolute;left:24px;top:353px;" width="2" height="88" viewBox="0 0 2 88"><rect x="1" y="0" width="1" height="1" fill="#8c8c8c"/><rect x="1" y="2" width="1" height="1" fill="#8c8c8c"/><rect x="1" y="4" width="1" height="1" fill="#8c8c8c"/><rect x="1" y="6" width="1" height="1" fill="#8c8c8c"/><rect x="1" y="8" width="1" height="1" fill="#8c8c8c"/><rect x="1" y="10" width="1" height="1" fill="#8c8c8c"/><rect x="1" y="12" width="1" height="1" fill="#8c8c8c"/><rect x="1" y="14" width="1" height="1" fill="#8c8c8c"/><rect x="1" y="16" width="1" height="1" fill="#8c8c8c"/><rect x="1" y="18" width="1" height="1" fill="#8c8c8c"/><rect x="1" y="20" width="1" height="1" fill="#8c8c8c"/><rect x="1" y="22" width="1" height="1" fill="#8c8c8c"/><rect x="1" y="24" width="1" height="1" fill="#8c8c8c"/><rect x="1" y="26" width="1" height="1" fill="#8c8c8c"/><rect x="1" y="28" width="1" height="1" fill="#8c8c8c"/><rect x="1" y="30" width="1" height="1" fill="#8c8c8c"/><rect x="1" y="32" width="1" height="1" fill="#8c8c8c"/><rect x="1" y="34" width="1" height="1" fill="#8c8c8c"/><rect x="1" y="36" width="1" height="1" fill="#8c8c8c"/><rect x="1" y="38" width="1" height="1" fill="#8c8c8c"/><rect x="1" y="40" width="1" height="1" fill="#8c8c8c"/><rect x="1" y="42" width="1" height="1" fill="#8c8c8c"/><rect x="1" y="44" width="1" height="1" fill="#8c8c8c"/><rect x="1" y="46" width="1" height="1" fill="#8c8c8c"/><rect x="1" y="48" width="1" height="1" fill="#8c8c8c"/><rect x="1" y="50" width="1" height="1" fill="#8c8c8c"/><rect x="1" y="52" width="1" height="1" fill="#8c8c8c"/><rect x="1" y="54" width="1" height="1" fill="#8c8c8c"/><rect x="1" y="56" width="1" height="1" fill="#8c8c8c"/><rect x="1" y="58" width="1" height="1" fill="#8c8c8c"/><rect x="1" y="60" width="1" height="1" fill="#8c8c8c"/><rect x="1" y="62" width="1" height="1" fill="#8c8c8c"/><rect x="1" y="64" width="1" height="1" fill="#8c8c8c"/><rect x="1" y="66" width="1" height="1" fill="#8c8c8c"/><rect x="1" y="68" width="1" height="1" fill="#8c8c8c"/><rect x="1" y="70" width="1" height="1" fill="#8c8c8c"/><rect x="1" y="72" width="1" height="1" fill="#8c8c8c"/><rect x="1" y="74" width="1" height="1" fill="#8c8c8c"/><rect x="1" y="76" width="1" height="1" fill="#8c8c8c"/><rect x="1" y="78" width="1" height="1" fill="#8c8c8c"/><rect x="1" y="80" width="1" height="1" fill="#8c8c8c"/><rect x="1" y="82" width="1" height="1" fill="#8c8c8c"/></svg>
<svg style="position:absolute;left:21px;top:360px;" width="9" height="9" viewBox="0 0 9 9"><rect x="0.5" y="0.5" width="8" height="8" fill="#fff" stroke="#919191"/><path d="M2 4.5 H7 M4.5 2 V7" stroke="#2a3e7a"/></svg>
<svg style="position:absolute;left:30px;top:364px;" width="7" height="1" viewBox="0 0 7 1"><rect x="1" y="0" width="1" height="1" fill="#8c8c8c"/><rect x="3" y="0" width="1" height="1" fill="#8c8c8c"/><rect x="5" y="0" width="1" height="1" fill="#8c8c8c"/></svg>
<svg style="position:absolute;left:37px;top:354px;" width="17" height="17" viewBox="0 0 17 17"><circle cx="6" cy="4" r="3.2" fill="#f2cf45" stroke="#a8861a"/><path d="M1.5 13 V10 Q1.5 7.5 4 7.5 H8 Q10.5 7.5 10.5 10 V13 Z" fill="#f2cf45" stroke="#a8861a"/><circle cx="11.5" cy="4.5" r="3.2" fill="#f6d85a" stroke="#a8861a"/><path d="M6.5 15.5 V10.5 Q6.5 8 9 8 H14 Q16.5 8 16.5 10.5 V15.5 Z" fill="#f6d85a" stroke="#a8861a"/><path d="M9 15 L13 9" stroke="#fff" stroke-width="1.2"/><circle cx="3.5" cy="13" r="3" fill="#2fb82f" stroke="#1a7a1a" stroke-width="0.6"/></svg>
<div class="t " style="left:60.4px;top:359.00px;font-size:11.9px;line-height:11.9px;color:#000;">Accounts</div>
<svg style="position:absolute;left:21px;top:378px;" width="9" height="9" viewBox="0 0 9 9"><rect x="0.5" y="0.5" width="8" height="8" fill="#fff" stroke="#919191"/><path d="M2 4.5 H7 M4.5 2 V7" stroke="#2a3e7a"/></svg>
<svg style="position:absolute;left:30px;top:382px;" width="7" height="1" viewBox="0 0 7 1"><rect x="1" y="0" width="1" height="1" fill="#8c8c8c"/><rect x="3" y="0" width="1" height="1" fill="#8c8c8c"/><rect x="5" y="0" width="1" height="1" fill="#8c8c8c"/></svg>
<svg style="position:absolute;left:37px;top:372px;" width="17" height="17" viewBox="0 0 17 17"><rect x="1.5" y="1.5" width="14" height="14" rx="2.5" fill="#f4d45a" stroke="#b8941f"/><rect x="2.5" y="2.5" width="12" height="5" rx="1.5" fill="#f9e69a"/><text x="5" y="13" font-size="11" font-style="italic" font-weight="bold" fill="#8a6400" font-family="Liberation Serif">f</text></svg>
<div class="t " style="left:60.4px;top:377.00px;font-size:11.9px;line-height:11.9px;color:#000;">Indicators</div>
<svg style="position:absolute;left:21px;top:396px;" width="9" height="9" viewBox="0 0 9 9"><rect x="0.5" y="0.5" width="8" height="8" fill="#fff" stroke="#919191"/><path d="M2 4.5 H7 M4.5 2 V7" stroke="#2a3e7a"/></svg>
<svg style="position:absolute;left:30px;top:400px;" width="7" height="1" viewBox="0 0 7 1"><rect x="1" y="0" width="1" height="1" fill="#8c8c8c"/><rect x="3" y="0" width="1" height="1" fill="#8c8c8c"/><rect x="5" y="0" width="1" height="1" fill="#8c8c8c"/></svg>
<svg style="position:absolute;left:37px;top:390px;" width="17" height="17" viewBox="0 0 17 17"><path d="M4.5 8 L9 14 L13.5 8 Z" fill="#f1cf45" stroke="#b08a1c"/><path d="M12 10 L15.5 13 L12 16 L8.5 13 Z" fill="#f4d45a" stroke="#a8861a"/><ellipse cx="8.5" cy="7" rx="8" ry="2.6" fill="#5fa0d8" stroke="#2f6aa5"/><path d="M4 7 Q4 1.5 8.5 1.5 Q13 1.5 13 7 Z" fill="#8cc0ea" stroke="#2f6aa5"/></svg>
<div class="t " style="left:60.4px;top:395.00px;font-size:11.9px;line-height:11.9px;color:#000;">Expert Advisors</div>
<svg style="position:absolute;left:21px;top:414px;" width="9" height="9" viewBox="0 0 9 9"><rect x="0.5" y="0.5" width="8" height="8" fill="#fff" stroke="#919191"/><path d="M2 4.5 H7 M4.5 2 V7" stroke="#2a3e7a"/></svg>
<svg style="position:absolute;left:30px;top:418px;" width="7" height="1" viewBox="0 0 7 1"><rect x="1" y="0" width="1" height="1" fill="#8c8c8c"/><rect x="3" y="0" width="1" height="1" fill="#8c8c8c"/><rect x="5" y="0" width="1" height="1" fill="#8c8c8c"/></svg>
<svg style="position:absolute;left:37px;top:408px;" width="17" height="17" viewBox="0 0 17 17"><rect x="1.5" y="1.5" width="13" height="13" rx="2.5" fill="#f4d45a" stroke="#b8941f"/><rect x="2.5" y="2.5" width="11" height="5" rx="1.5" fill="#f9e69a"/><text x="4.5" y="12" font-size="10.5" font-style="italic" font-weight="bold" fill="#8a6400" font-family="Liberation Serif">f</text><path d="M12 10 L15.5 13 L12 16 L8.5 13 Z" fill="#f4d45a" stroke="#a8861a"/></svg>
<div class="t " style="left:60.4px;top:413.00px;font-size:11.9px;line-height:11.9px;color:#000;">Custom Indicators</div>
<svg style="position:absolute;left:21px;top:432px;" width="9" height="9" viewBox="0 0 9 9"><rect x="0.5" y="0.5" width="8" height="8" fill="#fff" stroke="#919191"/><path d="M2 4.5 H7 M4.5 2 V7" stroke="#2a3e7a"/></svg>
<svg style="position:absolute;left:30px;top:436px;" width="7" height="1" viewBox="0 0 7 1"><rect x="1" y="0" width="1" height="1" fill="#8c8c8c"/><rect x="3" y="0" width="1" height="1" fill="#8c8c8c"/><rect x="5" y="0" width="1" height="1" fill="#8c8c8c"/></svg>
<svg style="position:absolute;left:37px;top:426px;" width="17" height="17" viewBox="0 0 17 17"><path d="M3.5 1.5 H13.5 V3.5 H11.5 V12.5 H5.5 V3.5 H3.5 Z" fill="#f6de80" stroke="#a8861a"/><rect x="2.5" y="0.5" width="12" height="3" rx="1" fill="#f0cf50" stroke="#a8861a"/><path d="M7 6 H8 M9 6 H10 M7 8 H8 M9 8 H10" stroke="#8a6a10"/><path d="M12 10 L15.5 13 L12 16 L8.5 13 Z" fill="#f4d45a" stroke="#a8861a"/></svg>
<div class="t " style="left:60.4px;top:431.00px;font-size:11.9px;line-height:11.9px;color:#000;">Scripts</div>
<div style="position:absolute;left:11px;top:489px;width:208px;height:20px;background:#f0f0f0;"></div>
<div style="position:absolute;left:11px;top:489px;width:208px;height:1px;background:#000;"></div>
<div style="position:absolute;left:14px;top:489px;width:61px;height:18px;box-sizing:border-box;border:1px solid #000;border-top:none;background:#fff;"></div>
<div class="t " style="left:23.7px;top:493.00px;font-size:10.6px;line-height:10.6px;color:#000;transform:scaleX(0.97);transform-origin:0 0;">Common</div>
<div class="t " style="left:84.2px;top:493.00px;font-size:10.6px;line-height:10.6px;color:#7d8796;">Favorites</div>
<div style="position:absolute;left:140px;top:493px;width:1px;height:11px;background:#808080;"></div>
<div style="position:absolute;left:11px;top:509px;width:208px;height:1px;background:#a0a0a0;"></div>
<div style="position:absolute;left:8px;top:511px;width:215px;height:1px;background:#a0a0a0;"></div>
<div style="position:absolute;left:222px;top:104px;width:762px;height:1px;background:#a0a0a0;"></div>
<div style="position:absolute;left:222px;top:104px;width:1px;height:409px;background:#a0a0a0;"></div>
<div style="position:absolute;left:223px;top:105px;width:760px;height:386px;background:#3a3a3a;"></div>
<div style="position:absolute;left:982px;top:105px;width:2px;height:386px;background:#f4f4f4;"></div>
<div style="position:absolute;left:223px;top:490px;width:761px;height:1px;background:#d8d8d8;"></div>
<div style="position:absolute;left:225px;top:107px;width:377px;height:190px;box-sizing:border-box;border-top:1px solid #fff;border-left:1px solid #fff;border-right:1px solid #48dcf6;border-bottom:1px solid #48dcf6;border-radius:4px 4px 0 0;background:linear-gradient(180deg,#97b3d4 0px,#a9c3e0 14px,#b6cfe9 28px,#bad2ec 100%);"></div>
<svg style="position:absolute;left:235px;top:117px;" width="15" height="15" viewBox="0 0 15 15"><rect x="0.5" y="0.5" width="10" height="8" fill="#fff" stroke="#4a8ef0" stroke-dasharray="1 0.6"/><rect x="4.5" y="5.5" width="10" height="9" fill="#fff" stroke="#4a8ef0" stroke-dasharray="1 0.6"/>
<path d="M2 6 L4 3 L6 5 L8 3" stroke="#4a8ef0" fill="none"/><path d="M6 12 L8 9 L10 12 L12 9" stroke="#4a8ef0" fill="none"/></svg>
<div class="t " style="left:254px;top:119.00px;font-size:12px;line-height:12px;color:#1b1b2e;transform:scaleX(0.883);transform-origin:0 0;">EURUSD,M15</div>
<div style="position:absolute;left:496px;top:116px;width:31px;height:17px;box-sizing:border-box;border:1px solid #5c6f86;border-radius:3px;background:linear-gradient(180deg,#d8e4f1 0%,#cbdaeb 45%,#aec4dd 50%,#bcd0e6 100%);"></div>
<div style="position:absolute;left:529px;top:116px;width:31px;height:17px;box-sizing:border-box;border:1px solid #5c6f86;border-radius:3px;background:linear-gradient(180deg,#d8e4f1 0%,#cbdaeb 45%,#aec4dd 50%,#bcd0e6 100%);"></div>
<div style="position:absolute;left:562px;top:116px;width:31px;height:17px;box-sizing:border-box;border:1px solid #6b2a20;border-radius:3px;background:linear-gradient(180deg,#e9a99c 0%,#df8f80 45%,#c84b35 50%,#d56b55 100%);"></div>
<div style="position:absolute;left:506px;top:124px;width:11px;height:4px;box-sizing:border-box;border:1px solid #3a3a3a;background:#fff;border-radius:1px;"></div>
<div style="position:absolute;left:539px;top:120px;width:11px;height:8px;box-sizing:border-box;border:1px solid #3a3a3a;background:#fff;border-radius:1px;"></div>
<div style="position:absolute;left:542px;top:122px;width:5px;height:3px;box-sizing:border-box;border:1px solid #3a3a3a;background:#b0c2d6;"></div>
<svg style="position:absolute;left:571px;top:119px;" width="12" height="10" viewBox="0 0 12 10"><path d="M2 1.5 L10 8.5 M10 1.5 L2 8.5" stroke="#3a3a3a" stroke-width="3.6"/><path d="M2 1.5 L10 8.5 M10 1.5 L2 8.5" stroke="#fff" stroke-width="2"/></svg>
<div style="position:absolute;left:232px;top:136px;width:363px;height:154px;background:#fff;"></div>
<div style="position:absolute;left:232px;top:136px;width:362px;height:153px;background:#a0a0a0;"></div>
<div style="position:absolute;left:233px;top:137px;width:361px;height:152px;background:#e3e3e3;"></div>
<div style="position:absolute;left:233px;top:137px;width:360px;height:151px;background:#696969;"></div>
<div style="position:absolute;left:234px;top:138px;width:359px;height:150px;background:#000;"></div>
<svg style="position:absolute;left:0;top:0" width="992" height="666" shape-rendering="crispEdges"><defs><clipPath id="c225107"><rect x="237" y="141" width="316" height="129"/></clipPath></defs><line x1="238" y1="163.5" x2="553" y2="163.5" stroke="#778899" stroke-dasharray="3 3"/><line x1="238" y1="206.5" x2="553" y2="206.5" stroke="#778899" stroke-dasharray="3 3"/><line x1="238" y1="248.5" x2="553" y2="248.5" stroke="#778899" stroke-dasharray="3 3"/><line x1="269.5" y1="142" x2="269.5" y2="270" stroke="#778899" stroke-dasharray="3 3"/><line x1="301.5" y1="142" x2="301.5" y2="270" stroke="#778899" stroke-dasharray="3 3"/><line x1="333.5" y1="142" x2="333.5" y2="270" stroke="#778899" stroke-dasharray="3 3"/><line x1="365.5" y1="142" x2="365.5" y2="270" stroke="#778899" stroke-dasharray="3 3"/><line x1="397.5" y1="142" x2="397.5" y2="270" stroke="#778899" stroke-dasharray="3 3"/><line x1="429.5" y1="142" x2="429.5" y2="270" stroke="#778899" stroke-dasharray="3 3"/><line x1="461.5" y1="142" x2="461.5" y2="270" stroke="#778899" stroke-dasharray="3 3"/><line x1="493.5" y1="142" x2="493.5" y2="270" stroke="#778899" stroke-dasharray="3 3"/><line x1="525.5" y1="142" x2="525.5" y2="270" stroke="#778899" stroke-dasharray="3 3"/><line x1="236" y1="205.5" x2="553" y2="205.5" stroke="#778899"/><g><rect x="237" y="181" width="1" height="4" fill="#00ff00"/><rect x="235.5" y="181.5" width="4" height="3" fill="#fff" stroke="#00ff00"/><rect x="245" y="163" width="1" height="22" fill="#00ff00"/><rect x="243.5" y="176.5" width="4" height="4" fill="#000" stroke="#00ff00"/><rect x="253" y="167" width="1" height="10" fill="#00ff00"/><rect x="251" y="171" width="5" height="1" fill="#00ff00"/><rect x="261" y="171" width="1" height="18" fill="#00ff00"/><rect x="259.5" y="176.5" width="4" height="4" fill="#fff" stroke="#00ff00"/><rect x="269" y="176" width="1" height="23" fill="#00ff00"/><rect x="267.5" y="184.5" width="4" height="9" fill="#fff" stroke="#00ff00"/><rect x="277" y="184" width="1" height="15" fill="#00ff00"/><rect x="275" y="188" width="5" height="1" fill="#00ff00"/><rect x="285" y="180" width="1" height="14" fill="#00ff00"/><rect x="283.5" y="184.5" width="4" height="9" fill="#fff" stroke="#00ff00"/><rect x="293" y="180" width="1" height="26" fill="#00ff00"/><rect x="291.5" y="188.5" width="4" height="13" fill="#fff" stroke="#00ff00"/><rect x="301" y="201" width="1" height="11" fill="#00ff00"/><rect x="299" y="205" width="5" height="1" fill="#00ff00"/><rect x="309" y="201" width="1" height="14" fill="#00ff00"/><rect x="307.5" y="211.5" width="4" height="3" fill="#fff" stroke="#00ff00"/><rect x="317" y="188" width="1" height="31" fill="#00ff00"/><rect x="315.5" y="193.5" width="4" height="25" fill="#000" stroke="#00ff00"/><rect x="325" y="171" width="1" height="27" fill="#00ff00"/><rect x="323.5" y="177.5" width="4" height="20" fill="#000" stroke="#00ff00"/><rect x="333" y="176" width="1" height="27" fill="#00ff00"/><rect x="331.5" y="180.5" width="4" height="13" fill="#fff" stroke="#00ff00"/><rect x="341" y="180" width="1" height="18" fill="#00ff00"/><rect x="339.5" y="188.5" width="4" height="9" fill="#000" stroke="#00ff00"/><rect x="349" y="180" width="1" height="18" fill="#00ff00"/><rect x="347.5" y="184.5" width="4" height="9" fill="#fff" stroke="#00ff00"/><rect x="357" y="197" width="1" height="9" fill="#00ff00"/><rect x="355.5" y="197.5" width="4" height="4" fill="#fff" stroke="#00ff00"/><rect x="365" y="201" width="1" height="5" fill="#00ff00"/><rect x="363.5" y="201.5" width="4" height="4" fill="#000" stroke="#00ff00"/><rect x="373" y="197" width="1" height="14" fill="#00ff00"/><rect x="371.5" y="197.5" width="4" height="13" fill="#fff" stroke="#00ff00"/><rect x="381" y="201" width="1" height="23" fill="#00ff00"/><rect x="379.5" y="215.5" width="4" height="3" fill="#fff" stroke="#00ff00"/><rect x="389" y="214" width="1" height="10" fill="#00ff00"/><rect x="387.5" y="218.5" width="4" height="5" fill="#000" stroke="#00ff00"/><rect x="397" y="214" width="1" height="14" fill="#00ff00"/><rect x="395.5" y="215.5" width="4" height="8" fill="#fff" stroke="#00ff00"/><rect x="405" y="210" width="1" height="18" fill="#00ff00"/><rect x="403.5" y="210.5" width="4" height="8" fill="#000" stroke="#00ff00"/><rect x="413" y="197" width="1" height="22" fill="#00ff00"/><rect x="411.5" y="215.5" width="4" height="3" fill="#fff" stroke="#00ff00"/><rect x="421" y="201" width="1" height="19" fill="#00ff00"/><rect x="419.5" y="201.5" width="4" height="14" fill="#000" stroke="#00ff00"/><rect x="429" y="197" width="1" height="9" fill="#00ff00"/><rect x="427.5" y="197.5" width="4" height="8" fill="#000" stroke="#00ff00"/><rect x="437" y="188" width="1" height="23" fill="#00ff00"/><rect x="435.5" y="188.5" width="4" height="5" fill="#000" stroke="#00ff00"/><rect x="445" y="193" width="1" height="9" fill="#00ff00"/><rect x="443.5" y="193.5" width="4" height="4" fill="#fff" stroke="#00ff00"/><rect x="453" y="176" width="1" height="22" fill="#00ff00"/><rect x="451.5" y="193.5" width="4" height="4" fill="#fff" stroke="#00ff00"/><rect x="461" y="193" width="1" height="10" fill="#00ff00"/><rect x="459.5" y="193.5" width="4" height="8" fill="#fff" stroke="#00ff00"/><rect x="469" y="180" width="1" height="23" fill="#00ff00"/><rect x="467.5" y="180.5" width="4" height="17" fill="#000" stroke="#00ff00"/><rect x="477" y="167" width="1" height="18" fill="#00ff00"/><rect x="475.5" y="176.5" width="4" height="4" fill="#fff" stroke="#00ff00"/><rect x="485" y="176" width="1" height="18" fill="#00ff00"/><rect x="483.5" y="184.5" width="4" height="4" fill="#fff" stroke="#00ff00"/><rect x="493" y="182" width="1" height="7" fill="#00ff00"/><rect x="491" y="184" width="5" height="1" fill="#00ff00"/><rect x="501" y="180" width="1" height="9" fill="#00ff00"/><rect x="499.5" y="184.5" width="4" height="4" fill="#000" stroke="#00ff00"/><rect x="509" y="188" width="1" height="14" fill="#00ff00"/><rect x="507.5" y="188.5" width="4" height="9" fill="#fff" stroke="#00ff00"/><rect x="517" y="193" width="1" height="13" fill="#00ff00"/><rect x="515.5" y="197.5" width="4" height="4" fill="#000" stroke="#00ff00"/><rect x="525" y="176" width="1" height="22" fill="#00ff00"/><rect x="523.5" y="180.5" width="4" height="13" fill="#000" stroke="#00ff00"/><rect x="533" y="180" width="1" height="26" fill="#00ff00"/><rect x="531.5" y="184.5" width="4" height="21" fill="#fff" stroke="#00ff00"/></g><rect x="236.5" y="140.5" width="317" height="130" fill="none" stroke="#fff"/><rect x="554" y="163" width="3" height="1" fill="#fff"/><rect x="554" y="206" width="3" height="1" fill="#fff"/><rect x="554" y="248" width="3" height="1" fill="#fff"/><rect x="237" y="271" width="1" height="3" fill="#fff"/><rect x="301" y="271" width="1" height="3" fill="#fff"/><rect x="365" y="271" width="1" height="3" fill="#fff"/><rect x="429" y="271" width="1" height="3" fill="#fff"/><rect x="493" y="271" width="1" height="3" fill="#fff"/></svg>
<div class="t " style="left:242px;top:144.00px;font-size:10px;line-height:10px;color:#fff;transform:scaleX(0.93);transform-origin:0 0;background:#000;padding-right:1px;">EURUSD,M15&nbsp;&nbsp;1.2820 1.2821 1.2815 1.2815</div>
<div class="t " style="left:559.5px;top:158.00px;font-size:9.6px;line-height:9.6px;color:#fff;transform:scaleX(0.95);transform-origin:0 0;">1.2825</div>
<div class="t " style="left:559.5px;top:243.00px;font-size:9.6px;line-height:9.6px;color:#fff;transform:scaleX(0.95);transform-origin:0 0;">1.2805</div>
<div style="position:absolute;left:555px;top:199px;width:36px;height:11px;background:#fff;"></div>
<div class="t " style="left:559.5px;top:200.00px;font-size:9.6px;line-height:9.6px;color:#000;transform:scaleX(0.95);transform-origin:0 0;">1.2815</div>
<div class="t " style="left:236px;top:275.00px;font-size:9.6px;line-height:9.6px;color:#fff;transform:scaleX(0.96);transform-origin:0 0;">29 Mar 2013</div>
<div class="t " style="left:300px;top:275.00px;font-size:9.6px;line-height:9.6px;color:#fff;transform:scaleX(0.96);transform-origin:0 0;">29 Mar 16:30</div>
<div class="t " style="left:364px;top:275.00px;font-size:9.6px;line-height:9.6px;color:#fff;transform:scaleX(0.96);transform-origin:0 0;">29 Mar 18:30</div>
<div class="t " style="left:428px;top:275.00px;font-size:9.6px;line-height:9.6px;color:#fff;transform:scaleX(0.96);transform-origin:0 0;">29 Mar 20:30</div>
<div class="t " style="left:492px;top:275.00px;font-size:9.6px;line-height:9.6px;color:#fff;transform:scaleX(0.96);transform-origin:0 0;">29 Mar 22:30</div>
<div style="position:absolute;left:604px;top:107px;width:377px;height:190px;box-sizing:border-box;border-top:1px solid #fff;border-left:1px solid #fff;border-right:1px solid #e8f0f8;border-bottom:1px solid #e8f0f8;border-radius:4px 4px 0 0;background:linear-gradient(180deg,#bccddd 0px,#c8d7e6 14px,#d3e0ee 28px,#d6e3f0 100%);"></div>
<svg style="position:absolute;left:614px;top:117px;" width="15" height="15" viewBox="0 0 15 15"><rect x="0.5" y="0.5" width="10" height="8" fill="#fff" stroke="#4a8ef0" stroke-dasharray="1 0.6"/><rect x="4.5" y="5.5" width="10" height="9" fill="#fff" stroke="#4a8ef0" stroke-dasharray="1 0.6"/>
<path d="M2 6 L4 3 L6 5 L8 3" stroke="#4a8ef0" fill="none"/><path d="M6 12 L8 9 L10 12 L12 9" stroke="#4a8ef0" fill="none"/></svg>
<div class="t " style="left:633px;top:119.00px;font-size:12px;line-height:12px;color:#2e3650;transform:scaleX(0.91);transform-origin:0 0;">USDJPY,M15</div>
<div style="position:absolute;left:875px;top:116px;width:31px;height:17px;box-sizing:border-box;border:1px solid #8a9bb5;border-radius:3px;background:linear-gradient(180deg,#dfe8f2 0%,#d8e3ef 45%,#cfdcea 55%,#d5e1ee 100%);"></div>
<div style="position:absolute;left:908px;top:116px;width:31px;height:17px;box-sizing:border-box;border:1px solid #8a9bb5;border-radius:3px;background:linear-gradient(180deg,#dfe8f2 0%,#d8e3ef 45%,#cfdcea 55%,#d5e1ee 100%);"></div>
<div style="position:absolute;left:941px;top:116px;width:31px;height:17px;box-sizing:border-box;border:1px solid #8a9bb5;border-radius:3px;background:linear-gradient(180deg,#dfe8f2 0%,#d8e3ef 45%,#cfdcea 55%,#d5e1ee 100%);"></div>
<div style="position:absolute;left:885px;top:124px;width:11px;height:4px;box-sizing:border-box;border:1px solid #3a3a3a;background:#fff;border-radius:1px;"></div>
<div style="position:absolute;left:918px;top:120px;width:11px;height:8px;box-sizing:border-box;border:1px solid #3a3a3a;background:#fff;border-radius:1px;"></div>
<div style="position:absolute;left:921px;top:122px;width:5px;height:3px;box-sizing:border-box;border:1px solid #3a3a3a;background:#b0c2d6;"></div>
<svg style="position:absolute;left:950px;top:119px;" width="12" height="10" viewBox="0 0 12 10"><path d="M2 1.5 L10 8.5 M10 1.5 L2 8.5" stroke="#3a3a3a" stroke-width="3.6"/><path d="M2 1.5 L10 8.5 M10 1.5 L2 8.5" stroke="#fff" stroke-width="2"/></svg>
<div style="position:absolute;left:611px;top:136px;width:363px;height:154px;background:#fff;"></div>
<div style="position:absolute;left:611px;top:136px;width:362px;height:153px;background:#a0a0a0;"></div>
<div style="position:absolute;left:612px;top:137px;width:361px;height:152px;background:#e3e3e3;"></div>
<div style="position:absolute;left:612px;top:137px;width:360px;height:151px;background:#696969;"></div>
<div style="position:absolute;left:613px;top:138px;width:359px;height:150px;background:#fff;"></div>
<svg style="position:absolute;left:0;top:0" width="992" height="666" shape-rendering="crispEdges"><defs><clipPath id="c604107"><rect x="616" y="141" width="316" height="129"/></clipPath></defs><line x1="617" y1="163.5" x2="932" y2="163.5" stroke="#c0c0c0" stroke-dasharray="3 3"/><line x1="617" y1="206.5" x2="932" y2="206.5" stroke="#c0c0c0" stroke-dasharray="3 3"/><line x1="617" y1="248.5" x2="932" y2="248.5" stroke="#c0c0c0" stroke-dasharray="3 3"/><line x1="648.5" y1="142" x2="648.5" y2="270" stroke="#c0c0c0" stroke-dasharray="3 3"/><line x1="680.5" y1="142" x2="680.5" y2="270" stroke="#c0c0c0" stroke-dasharray="3 3"/><line x1="712.5" y1="142" x2="712.5" y2="270" stroke="#c0c0c0" stroke-dasharray="3 3"/><line x1="744.5" y1="142" x2="744.5" y2="270" stroke="#c0c0c0" stroke-dasharray="3 3"/><line x1="776.5" y1="142" x2="776.5" y2="270" stroke="#c0c0c0" stroke-dasharray="3 3"/><line x1="808.5" y1="142" x2="808.5" y2="270" stroke="#c0c0c0" stroke-dasharray="3 3"/><line x1="840.5" y1="142" x2="840.5" y2="270" stroke="#c0c0c0" stroke-dasharray="3 3"/><line x1="872.5" y1="142" x2="872.5" y2="270" stroke="#c0c0c0" stroke-dasharray="3 3"/><line x1="904.5" y1="142" x2="904.5" y2="270" stroke="#c0c0c0" stroke-dasharray="3 3"/><line x1="615" y1="180.5" x2="932" y2="180.5" stroke="#c0c0c0"/><rect x="616" y="260" width="1" height="10" fill="#008000"/><rect x="624" y="262" width="1" height="8" fill="#008000"/><rect x="632" y="264" width="1" height="6" fill="#008000"/><rect x="640" y="263" width="1" height="7" fill="#008000"/><rect x="648" y="260" width="1" height="10" fill="#008000"/><rect x="656" y="267" width="1" height="3" fill="#008000"/><rect x="664" y="262" width="1" height="8" fill="#008000"/><rect x="672" y="260" width="1" height="10" fill="#008000"/><rect x="680" y="258" width="1" height="12" fill="#008000"/><rect x="688" y="259" width="1" height="11" fill="#008000"/><rect x="696" y="258" width="1" height="12" fill="#008000"/><rect x="704" y="265" width="1" height="5" fill="#008000"/><rect x="712" y="265" width="1" height="5" fill="#008000"/><rect x="720" y="260" width="1" height="10" fill="#008000"/><rect x="728" y="260" width="1" height="10" fill="#008000"/><rect x="736" y="261" width="1" height="9" fill="#008000"/><rect x="744" y="260" width="1" height="10" fill="#008000"/><rect x="752" y="263" width="1" height="7" fill="#008000"/><rect x="760" y="262" width="1" height="8" fill="#008000"/><rect x="768" y="258" width="1" height="12" fill="#008000"/><rect x="776" y="262" width="1" height="8" fill="#008000"/><rect x="784" y="263" width="1" height="7" fill="#008000"/><rect x="792" y="254" width="1" height="16" fill="#008000"/><rect x="800" y="264" width="1" height="6" fill="#008000"/><rect x="808" y="257" width="1" height="13" fill="#008000"/><rect x="816" y="261" width="1" height="9" fill="#008000"/><rect x="824" y="258" width="1" height="12" fill="#008000"/><rect x="832" y="263" width="1" height="7" fill="#008000"/><rect x="840" y="264" width="1" height="6" fill="#008000"/><rect x="848" y="267" width="1" height="3" fill="#008000"/><rect x="856" y="263" width="1" height="7" fill="#008000"/><rect x="864" y="261" width="1" height="9" fill="#008000"/><rect x="872" y="264" width="1" height="6" fill="#008000"/><rect x="880" y="262" width="1" height="8" fill="#008000"/><rect x="888" y="263" width="1" height="7" fill="#008000"/><rect x="896" y="263" width="1" height="7" fill="#008000"/><rect x="904" y="262" width="1" height="8" fill="#008000"/><rect x="912" y="257" width="1" height="13" fill="#008000"/><g><rect x="616" y="240" width="1" height="5" fill="#000"/><rect x="614.5" y="240.5" width="4" height="4" fill="#fff" stroke="#000"/><rect x="624" y="227" width="1" height="18" fill="#000"/><rect x="622.5" y="231.5" width="4" height="13" fill="#fff" stroke="#000"/><rect x="632" y="227" width="1" height="10" fill="#000"/><rect x="630.5" y="227.5" width="4" height="4" fill="#000" stroke="#000"/><rect x="640" y="230" width="1" height="12" fill="#000"/><rect x="638" y="235" width="5" height="1" fill="#000"/><rect x="648" y="240" width="1" height="13" fill="#000"/><rect x="646.5" y="240.5" width="4" height="4" fill="#000" stroke="#000"/><rect x="656" y="240" width="1" height="9" fill="#000"/><rect x="654" y="240" width="5" height="1" fill="#000"/><rect x="664" y="231" width="1" height="14" fill="#000"/><rect x="662.5" y="235.5" width="4" height="9" fill="#fff" stroke="#000"/><rect x="672" y="218" width="1" height="23" fill="#000"/><rect x="670.5" y="218.5" width="4" height="22" fill="#fff" stroke="#000"/><rect x="680" y="218" width="1" height="18" fill="#000"/><rect x="678.5" y="223.5" width="4" height="8" fill="#000" stroke="#000"/><rect x="688" y="218" width="1" height="14" fill="#000"/><rect x="686" y="227" width="5" height="1" fill="#000"/><rect x="696" y="205" width="1" height="19" fill="#000"/><rect x="694.5" y="214.5" width="4" height="9" fill="#fff" stroke="#000"/><rect x="704" y="201" width="1" height="23" fill="#000"/><rect x="702.5" y="205.5" width="4" height="13" fill="#fff" stroke="#000"/><rect x="712" y="197" width="1" height="14" fill="#000"/><rect x="710.5" y="201.5" width="4" height="9" fill="#000" stroke="#000"/><rect x="720" y="201" width="1" height="18" fill="#000"/><rect x="718" y="205" width="5" height="1" fill="#000"/><rect x="728" y="201" width="1" height="14" fill="#000"/><rect x="726.5" y="205.5" width="4" height="5" fill="#fff" stroke="#000"/><rect x="736" y="201" width="1" height="18" fill="#000"/><rect x="734.5" y="201.5" width="4" height="13" fill="#000" stroke="#000"/><rect x="744" y="201" width="1" height="14" fill="#000"/><rect x="742.5" y="205.5" width="4" height="5" fill="#fff" stroke="#000"/><rect x="752" y="201" width="1" height="10" fill="#000"/><rect x="750.5" y="201.5" width="4" height="9" fill="#fff" stroke="#000"/><rect x="760" y="184" width="1" height="18" fill="#000"/><rect x="758.5" y="188.5" width="4" height="9" fill="#fff" stroke="#000"/><rect x="768" y="184" width="1" height="18" fill="#000"/><rect x="766.5" y="184.5" width="4" height="4" fill="#000" stroke="#000"/><rect x="776" y="184" width="1" height="14" fill="#000"/><rect x="774.5" y="188.5" width="4" height="5" fill="#fff" stroke="#000"/><rect x="784" y="184" width="1" height="14" fill="#000"/><rect x="782.5" y="184.5" width="4" height="4" fill="#000" stroke="#000"/><rect x="792" y="184" width="1" height="10" fill="#000"/><rect x="790" y="193" width="5" height="1" fill="#000"/><rect x="800" y="188" width="1" height="6" fill="#000"/><rect x="798" y="188" width="5" height="1" fill="#000"/><rect x="808" y="188" width="1" height="18" fill="#000"/><rect x="806.5" y="193.5" width="4" height="8" fill="#000" stroke="#000"/><rect x="816" y="184" width="1" height="22" fill="#000"/><rect x="814.5" y="184.5" width="4" height="21" fill="#fff" stroke="#000"/><rect x="824" y="180" width="1" height="14" fill="#000"/><rect x="822.5" y="184.5" width="4" height="4" fill="#fff" stroke="#000"/><rect x="832" y="171" width="1" height="18" fill="#000"/><rect x="830.5" y="176.5" width="4" height="12" fill="#fff" stroke="#000"/><rect x="840" y="176" width="1" height="9" fill="#000"/><rect x="838.5" y="180.5" width="4" height="4" fill="#000" stroke="#000"/><rect x="848" y="180" width="1" height="5" fill="#000"/><rect x="846" y="180" width="5" height="1" fill="#000"/><rect x="856" y="180" width="1" height="9" fill="#000"/><rect x="854" y="184" width="5" height="1" fill="#000"/><rect x="864" y="184" width="1" height="18" fill="#000"/><rect x="862.5" y="188.5" width="4" height="9" fill="#000" stroke="#000"/><rect x="872" y="193" width="1" height="5" fill="#000"/><rect x="870" y="193" width="5" height="1" fill="#000"/><rect x="880" y="193" width="1" height="9" fill="#000"/><rect x="878" y="197" width="5" height="1" fill="#000"/><rect x="888" y="193" width="1" height="9" fill="#000"/><rect x="886.5" y="197.5" width="4" height="4" fill="#fff" stroke="#000"/><rect x="896" y="197" width="1" height="9" fill="#000"/><rect x="894.5" y="197.5" width="4" height="4" fill="#fff" stroke="#000"/><rect x="904" y="180" width="1" height="22" fill="#000"/><rect x="902.5" y="184.5" width="4" height="17" fill="#fff" stroke="#000"/><rect x="912" y="163" width="1" height="39" fill="#000"/><rect x="910" y="180" width="5" height="1" fill="#000"/></g><rect x="615.5" y="140.5" width="317" height="130" fill="none" stroke="#000"/><rect x="933" y="163" width="3" height="1" fill="#000"/><rect x="933" y="206" width="3" height="1" fill="#000"/><rect x="933" y="248" width="3" height="1" fill="#000"/><rect x="616" y="271" width="1" height="3" fill="#000"/><rect x="680" y="271" width="1" height="3" fill="#000"/><rect x="744" y="271" width="1" height="3" fill="#000"/><rect x="808" y="271" width="1" height="3" fill="#000"/><rect x="872" y="271" width="1" height="3" fill="#000"/></svg>
<div class="t " style="left:621px;top:144.00px;font-size:10px;line-height:10px;color:#000;transform:scaleX(0.93);transform-origin:0 0;background:#fff;padding-right:1px;">USDJPY,M15&nbsp;&nbsp;94.21 94.25 94.16 94.21</div>
<div class="t " style="left:938.5px;top:158.00px;font-size:9.6px;line-height:9.6px;color:#000;transform:scaleX(0.95);transform-origin:0 0;">94.25</div>
<div class="t " style="left:938.5px;top:201.00px;font-size:9.6px;line-height:9.6px;color:#000;transform:scaleX(0.95);transform-origin:0 0;">94.15</div>
<div class="t " style="left:938.5px;top:243.00px;font-size:9.6px;line-height:9.6px;color:#000;transform:scaleX(0.95);transform-origin:0 0;">94.05</div>
<div style="position:absolute;left:934px;top:174px;width:36px;height:11px;background:#000;"></div>
<div class="t " style="left:938.5px;top:175.00px;font-size:9.6px;line-height:9.6px;color:#fff;transform:scaleX(0.95);transform-origin:0 0;">94.21</div>
<div class="t " style="left:615px;top:275.00px;font-size:9.6px;line-height:9.6px;color:#000;transform:scaleX(0.96);transform-origin:0 0;">29 Mar 2013</div>
<div class="t " style="left:679px;top:275.00px;font-size:9.6px;line-height:9.6px;color:#000;transform:scaleX(0.96);transform-origin:0 0;">29 Mar 16:30</div>
<div class="t " style="left:743px;top:275.00px;font-size:9.6px;line-height:9.6px;color:#000;transform:scaleX(0.96);transform-origin:0 0;">29 Mar 18:30</div>
<div class="t " style="left:807px;top:275.00px;font-size:9.6px;line-height:9.6px;color:#000;transform:scaleX(0.96);transform-origin:0 0;">29 Mar 20:30</div>
<div class="t " style="left:871px;top:275.00px;font-size:9.6px;line-height:9.6px;color:#000;transform:scaleX(0.96);transform-origin:0 0;">29 Mar 22:30</div>
<div style="position:absolute;left:225px;top:299px;width:377px;height:190px;box-sizing:border-box;border-top:1px solid #fff;border-left:1px solid #fff;border-right:1px solid #e8f0f8;border-bottom:1px solid #e8f0f8;border-radius:4px 4px 0 0;background:linear-gradient(180deg,#bccddd 0px,#c8d7e6 14px,#d3e0ee 28px,#d6e3f0 100%);"></div>
<svg style="position:absolute;left:235px;top:309px;" width="15" height="15" viewBox="0 0 15 15"><rect x="0.5" y="0.5" width="10" height="8" fill="#fff" stroke="#4a8ef0" stroke-dasharray="1 0.6"/><rect x="4.5" y="5.5" width="10" height="9" fill="#fff" stroke="#4a8ef0" stroke-dasharray="1 0.6"/>
<path d="M2 6 L4 3 L6 5 L8 3" stroke="#4a8ef0" fill="none"/><path d="M6 12 L8 9 L10 12 L12 9" stroke="#4a8ef0" fill="none"/></svg>
<div class="t " style="left:254px;top:311.00px;font-size:12px;line-height:12px;color:#2e3650;transform:scaleX(0.965);transform-origin:0 0;">#AAPL,M15</div>
<div style="position:absolute;left:496px;top:308px;width:31px;height:17px;box-sizing:border-box;border:1px solid #8a9bb5;border-radius:3px;background:linear-gradient(180deg,#dfe8f2 0%,#d8e3ef 45%,#cfdcea 55%,#d5e1ee 100%);"></div>
<div style="position:absolute;left:529px;top:308px;width:31px;height:17px;box-sizing:border-box;border:1px solid #8a9bb5;border-radius:3px;background:linear-gradient(180deg,#dfe8f2 0%,#d8e3ef 45%,#cfdcea 55%,#d5e1ee 100%);"></div>
<div style="position:absolute;left:562px;top:308px;width:31px;height:17px;box-sizing:border-box;border:1px solid #8a9bb5;border-radius:3px;background:linear-gradient(180deg,#dfe8f2 0%,#d8e3ef 45%,#cfdcea 55%,#d5e1ee 100%);"></div>
<div style="position:absolute;left:506px;top:316px;width:11px;height:4px;box-sizing:border-box;border:1px solid #3a3a3a;background:#fff;border-radius:1px;"></div>
<div style="position:absolute;left:539px;top:312px;width:11px;height:8px;box-sizing:border-box;border:1px solid #3a3a3a;background:#fff;border-radius:1px;"></div>
<div style="position:absolute;left:542px;top:314px;width:5px;height:3px;box-sizing:border-box;border:1px solid #3a3a3a;background:#b0c2d6;"></div>
<svg style="position:absolute;left:571px;top:311px;" width="12" height="10" viewBox="0 0 12 10"><path d="M2 1.5 L10 8.5 M10 1.5 L2 8.5" stroke="#3a3a3a" stroke-width="3.6"/><path d="M2 1.5 L10 8.5 M10 1.5 L2 8.5" stroke="#fff" stroke-width="2"/></svg>
<div style="position:absolute;left:232px;top:328px;width:363px;height:154px;background:#fff;"></div>
<div style="position:absolute;left:232px;top:328px;width:362px;height:153px;background:#a0a0a0;"></div>
<div style="position:absolute;left:233px;top:329px;width:361px;height:152px;background:#e3e3e3;"></div>
<div style="position:absolute;left:233px;top:329px;width:360px;height:151px;background:#696969;"></div>
<div style="position:absolute;left:234px;top:330px;width:359px;height:150px;background:#000;"></div>
<svg style="position:absolute;left:0;top:0" width="992" height="666" shape-rendering="crispEdges"><defs><clipPath id="c225299"><rect x="237" y="333" width="316" height="129"/></clipPath></defs><line x1="238" y1="360.5" x2="553" y2="360.5" stroke="#778899" stroke-dasharray="3 3"/><line x1="238" y1="393.5" x2="553" y2="393.5" stroke="#778899" stroke-dasharray="3 3"/><line x1="238" y1="426.5" x2="553" y2="426.5" stroke="#778899" stroke-dasharray="3 3"/><line x1="238" y1="459.5" x2="553" y2="459.5" stroke="#778899" stroke-dasharray="3 3"/><line x1="269.5" y1="334" x2="269.5" y2="462" stroke="#778899" stroke-dasharray="3 3"/><line x1="301.5" y1="334" x2="301.5" y2="462" stroke="#778899" stroke-dasharray="3 3"/><line x1="333.5" y1="334" x2="333.5" y2="462" stroke="#778899" stroke-dasharray="3 3"/><line x1="365.5" y1="334" x2="365.5" y2="462" stroke="#778899" stroke-dasharray="3 3"/><line x1="397.5" y1="334" x2="397.5" y2="462" stroke="#778899" stroke-dasharray="3 3"/><line x1="429.5" y1="334" x2="429.5" y2="462" stroke="#778899" stroke-dasharray="3 3"/><line x1="461.5" y1="334" x2="461.5" y2="462" stroke="#778899" stroke-dasharray="3 3"/><line x1="493.5" y1="334" x2="493.5" y2="462" stroke="#778899" stroke-dasharray="3 3"/><line x1="525.5" y1="334" x2="525.5" y2="462" stroke="#778899" stroke-dasharray="3 3"/><line x1="236" y1="448.5" x2="553" y2="448.5" stroke="#778899"/><g><rect x="237" y="351" width="1" height="8" fill="#00ff00"/><rect x="235.5" y="352.5" width="4" height="6" fill="#fff" stroke="#00ff00"/><rect x="245" y="355" width="1" height="9" fill="#00ff00"/><rect x="243.5" y="359.5" width="4" height="2" fill="#fff" stroke="#00ff00"/><rect x="253" y="355" width="1" height="11" fill="#00ff00"/><rect x="251.5" y="358.5" width="4" height="3" fill="#000" stroke="#00ff00"/><rect x="261" y="354" width="1" height="7" fill="#00ff00"/><rect x="259.5" y="356.5" width="4" height="4" fill="#000" stroke="#00ff00"/><rect x="269" y="352" width="1" height="7" fill="#00ff00"/><rect x="267.5" y="354.5" width="4" height="2" fill="#fff" stroke="#00ff00"/><rect x="277" y="346" width="1" height="11" fill="#00ff00"/><rect x="275.5" y="346.5" width="4" height="8" fill="#000" stroke="#00ff00"/><rect x="285" y="346" width="1" height="4" fill="#00ff00"/><rect x="283" y="346" width="5" height="1" fill="#00ff00"/><rect x="293" y="346" width="1" height="5" fill="#00ff00"/><rect x="291.5" y="347.5" width="4" height="1" fill="#fff" stroke="#00ff00"/><rect x="301" y="346" width="1" height="7" fill="#00ff00"/><rect x="299.5" y="347.5" width="4" height="2" fill="#fff" stroke="#00ff00"/><rect x="309" y="346" width="1" height="12" fill="#00ff00"/><rect x="307.5" y="347.5" width="4" height="5" fill="#fff" stroke="#00ff00"/><rect x="317" y="350" width="1" height="21" fill="#00ff00"/><rect x="315.5" y="352.5" width="4" height="5" fill="#fff" stroke="#00ff00"/><rect x="325" y="351" width="1" height="9" fill="#00ff00"/><rect x="323" y="357" width="5" height="1" fill="#00ff00"/><rect x="333" y="370" width="1" height="26" fill="#00ff00"/><rect x="331.5" y="375.5" width="4" height="6" fill="#000" stroke="#00ff00"/><rect x="341" y="359" width="1" height="23" fill="#00ff00"/><rect x="339" y="376" width="5" height="1" fill="#00ff00"/><rect x="349" y="371" width="1" height="19" fill="#00ff00"/><rect x="347.5" y="378.5" width="4" height="6" fill="#fff" stroke="#00ff00"/><rect x="357" y="380" width="1" height="13" fill="#00ff00"/><rect x="355.5" y="383.5" width="4" height="8" fill="#fff" stroke="#00ff00"/><rect x="365" y="384" width="1" height="9" fill="#00ff00"/><rect x="363.5" y="385.5" width="4" height="6" fill="#000" stroke="#00ff00"/><rect x="373" y="385" width="1" height="15" fill="#00ff00"/><rect x="371.5" y="385.5" width="4" height="8" fill="#fff" stroke="#00ff00"/><rect x="381" y="390" width="1" height="10" fill="#00ff00"/><rect x="379.5" y="393.5" width="4" height="4" fill="#fff" stroke="#00ff00"/><rect x="389" y="396" width="1" height="18" fill="#00ff00"/><rect x="387.5" y="396.5" width="4" height="15" fill="#fff" stroke="#00ff00"/><rect x="397" y="410" width="1" height="29" fill="#00ff00"/><rect x="395.5" y="411.5" width="4" height="20" fill="#fff" stroke="#00ff00"/><rect x="405" y="423" width="1" height="15" fill="#00ff00"/><rect x="403" y="431" width="5" height="1" fill="#00ff00"/><rect x="413" y="424" width="1" height="13" fill="#00ff00"/><rect x="411.5" y="430.5" width="4" height="3" fill="#fff" stroke="#00ff00"/><rect x="421" y="426" width="1" height="13" fill="#00ff00"/><rect x="419" y="432" width="5" height="1" fill="#00ff00"/><rect x="429" y="425" width="1" height="9" fill="#00ff00"/><rect x="427.5" y="425.5" width="4" height="8" fill="#000" stroke="#00ff00"/><rect x="437" y="424" width="1" height="14" fill="#00ff00"/><rect x="435.5" y="426.5" width="4" height="7" fill="#fff" stroke="#00ff00"/><rect x="445" y="433" width="1" height="7" fill="#00ff00"/><rect x="443.5" y="433.5" width="4" height="3" fill="#fff" stroke="#00ff00"/><rect x="453" y="431" width="1" height="8" fill="#00ff00"/><rect x="451.5" y="432.5" width="4" height="4" fill="#000" stroke="#00ff00"/><rect x="461" y="426" width="1" height="9" fill="#00ff00"/><rect x="459" y="432" width="5" height="1" fill="#00ff00"/><rect x="469" y="431" width="1" height="8" fill="#00ff00"/><rect x="467.5" y="432.5" width="4" height="3" fill="#fff" stroke="#00ff00"/><rect x="477" y="433" width="1" height="15" fill="#00ff00"/><rect x="475.5" y="435.5" width="4" height="8" fill="#fff" stroke="#00ff00"/><rect x="485" y="443" width="1" height="9" fill="#00ff00"/><rect x="483.5" y="443.5" width="4" height="8" fill="#fff" stroke="#00ff00"/><rect x="493" y="448" width="1" height="12" fill="#00ff00"/><rect x="491.5" y="448.5" width="4" height="3" fill="#fff" stroke="#00ff00"/><rect x="501" y="444" width="1" height="13" fill="#00ff00"/><rect x="499.5" y="444.5" width="4" height="5" fill="#000" stroke="#00ff00"/><rect x="509" y="442" width="1" height="10" fill="#00ff00"/><rect x="507.5" y="444.5" width="4" height="4" fill="#fff" stroke="#00ff00"/><rect x="517" y="446" width="1" height="7" fill="#00ff00"/><rect x="515" y="448" width="5" height="1" fill="#00ff00"/><rect x="525" y="448" width="1" height="9" fill="#00ff00"/><rect x="523.5" y="448.5" width="4" height="3" fill="#fff" stroke="#00ff00"/><rect x="533" y="440" width="1" height="17" fill="#00ff00"/><rect x="531.5" y="448.5" width="4" height="3" fill="#000" stroke="#00ff00"/></g><rect x="236.5" y="332.5" width="317" height="130" fill="none" stroke="#fff"/><rect x="554" y="360" width="3" height="1" fill="#fff"/><rect x="554" y="393" width="3" height="1" fill="#fff"/><rect x="554" y="426" width="3" height="1" fill="#fff"/><rect x="554" y="459" width="3" height="1" fill="#fff"/><rect x="237" y="463" width="1" height="3" fill="#fff"/><rect x="301" y="463" width="1" height="3" fill="#fff"/><rect x="365" y="463" width="1" height="3" fill="#fff"/><rect x="429" y="463" width="1" height="3" fill="#fff"/><rect x="493" y="463" width="1" height="3" fill="#fff"/></svg>
<div class="t " style="left:242px;top:336.00px;font-size:10px;line-height:10px;color:#fff;transform:scaleX(0.93);transform-origin:0 0;background:#000;padding-right:1px;">#AAPL,M15&nbsp;&nbsp;442.09 443.19 441.52 442.39</div>
<div class="t " style="left:559.5px;top:355.00px;font-size:9.6px;line-height:9.6px;color:#fff;transform:scaleX(0.95);transform-origin:0 0;">451.50</div>
<div class="t " style="left:559.5px;top:388.00px;font-size:9.6px;line-height:9.6px;color:#fff;transform:scaleX(0.95);transform-origin:0 0;">448.10</div>
<div class="t " style="left:559.5px;top:421.00px;font-size:9.6px;line-height:9.6px;color:#fff;transform:scaleX(0.95);transform-origin:0 0;">444.70</div>
<div class="t " style="left:559.5px;top:454.00px;font-size:9.6px;line-height:9.6px;color:#fff;transform:scaleX(0.95);transform-origin:0 0;">441.30</div>
<div style="position:absolute;left:555px;top:442px;width:36px;height:11px;background:#fff;"></div>
<div class="t " style="left:559.5px;top:443.00px;font-size:9.6px;line-height:9.6px;color:#000;transform:scaleX(0.95);transform-origin:0 0;">442.39</div>
<div class="t " style="left:236px;top:467.00px;font-size:9.6px;line-height:9.6px;color:#fff;transform:scaleX(0.96);transform-origin:0 0;">27 Mar 2013</div>
<div class="t " style="left:300px;top:467.00px;font-size:9.6px;line-height:9.6px;color:#fff;transform:scaleX(0.96);transform-origin:0 0;">27 Mar 22:00</div>
<div class="t " style="left:364px;top:467.00px;font-size:9.6px;line-height:9.6px;color:#fff;transform:scaleX(0.96);transform-origin:0 0;">28 Mar 17:30</div>
<div class="t " style="left:428px;top:467.00px;font-size:9.6px;line-height:9.6px;color:#fff;transform:scaleX(0.96);transform-origin:0 0;">28 Mar 19:30</div>
<div class="t " style="left:492px;top:467.00px;font-size:9.6px;line-height:9.6px;color:#fff;transform:scaleX(0.96);transform-origin:0 0;">28 Mar 21:30</div>
<div style="position:absolute;left:604px;top:299px;width:377px;height:190px;box-sizing:border-box;border-top:1px solid #fff;border-left:1px solid #fff;border-right:1px solid #e8f0f8;border-bottom:1px solid #e8f0f8;border-radius:4px 4px 0 0;background:linear-gradient(180deg,#bccddd 0px,#c8d7e6 14px,#d3e0ee 28px,#d6e3f0 100%);"></div>
<svg style="position:absolute;left:614px;top:309px;" width="15" height="15" viewBox="0 0 15 15"><rect x="0.5" y="0.5" width="10" height="8" fill="#fff" stroke="#4a8ef0" stroke-dasharray="1 0.6"/><rect x="4.5" y="5.5" width="10" height="9" fill="#fff" stroke="#4a8ef0" stroke-dasharray="1 0.6"/>
<path d="M2 6 L4 3 L6 5 L8 3" stroke="#4a8ef0" fill="none"/><path d="M6 12 L8 9 L10 12 L12 9" stroke="#4a8ef0" fill="none"/></svg>
<div class="t " style="left:633px;top:311.00px;font-size:12px;line-height:12px;color:#2e3650;transform:scaleX(0.905);transform-origin:0 0;">GBPUSD,M15</div>
<div style="position:absolute;left:875px;top:308px;width:31px;height:17px;box-sizing:border-box;border:1px solid #8a9bb5;border-radius:3px;background:linear-gradient(180deg,#dfe8f2 0%,#d8e3ef 45%,#cfdcea 55%,#d5e1ee 100%);"></div>
<div style="position:absolute;left:908px;top:308px;width:31px;height:17px;box-sizing:border-box;border:1px solid #8a9bb5;border-radius:3px;background:linear-gradient(180deg,#dfe8f2 0%,#d8e3ef 45%,#cfdcea 55%,#d5e1ee 100%);"></div>
<div style="position:absolute;left:941px;top:308px;width:31px;height:17px;box-sizing:border-box;border:1px solid #8a9bb5;border-radius:3px;background:linear-gradient(180deg,#dfe8f2 0%,#d8e3ef 45%,#cfdcea 55%,#d5e1ee 100%);"></div>
<div style="position:absolute;left:885px;top:316px;width:11px;height:4px;box-sizing:border-box;border:1px solid #3a3a3a;background:#fff;border-radius:1px;"></div>
<div style="position:absolute;left:918px;top:312px;width:11px;height:8px;box-sizing:border-box;border:1px solid #3a3a3a;background:#fff;border-radius:1px;"></div>
<div style="position:absolute;left:921px;top:314px;width:5px;height:3px;box-sizing:border-box;border:1px solid #3a3a3a;background:#b0c2d6;"></div>
<svg style="position:absolute;left:950px;top:311px;" width="12" height="10" viewBox="0 0 12 10"><path d="M2 1.5 L10 8.5 M10 1.5 L2 8.5" stroke="#3a3a3a" stroke-width="3.6"/><path d="M2 1.5 L10 8.5 M10 1.5 L2 8.5" stroke="#fff" stroke-width="2"/></svg>
<div style="position:absolute;left:611px;top:328px;width:363px;height:154px;background:#fff;"></div>
<div style="position:absolute;left:611px;top:328px;width:362px;height:153px;background:#a0a0a0;"></div>
<div style="position:absolute;left:612px;top:329px;width:361px;height:152px;background:#e3e3e3;"></div>
<div style="position:absolute;left:612px;top:329px;width:360px;height:151px;background:#696969;"></div>
<div style="position:absolute;left:613px;top:330px;width:359px;height:150px;background:#000;"></div>
<svg style="position:absolute;left:0;top:0" width="992" height="666" shape-rendering="crispEdges"><defs><clipPath id="c604299"><rect x="616" y="333" width="316" height="129"/></clipPath></defs><line x1="617" y1="350.5" x2="932" y2="350.5" stroke="#778899" stroke-dasharray="3 3"/><line x1="617" y1="398.5" x2="932" y2="398.5" stroke="#778899" stroke-dasharray="3 3"/><line x1="617" y1="446.5" x2="932" y2="446.5" stroke="#778899" stroke-dasharray="3 3"/><line x1="648.5" y1="334" x2="648.5" y2="462" stroke="#778899" stroke-dasharray="3 3"/><line x1="680.5" y1="334" x2="680.5" y2="462" stroke="#778899" stroke-dasharray="3 3"/><line x1="712.5" y1="334" x2="712.5" y2="462" stroke="#778899" stroke-dasharray="3 3"/><line x1="744.5" y1="334" x2="744.5" y2="462" stroke="#778899" stroke-dasharray="3 3"/><line x1="776.5" y1="334" x2="776.5" y2="462" stroke="#778899" stroke-dasharray="3 3"/><line x1="808.5" y1="334" x2="808.5" y2="462" stroke="#778899" stroke-dasharray="3 3"/><line x1="840.5" y1="334" x2="840.5" y2="462" stroke="#778899" stroke-dasharray="3 3"/><line x1="872.5" y1="334" x2="872.5" y2="462" stroke="#778899" stroke-dasharray="3 3"/><line x1="904.5" y1="334" x2="904.5" y2="462" stroke="#778899" stroke-dasharray="3 3"/><line x1="615" y1="362.5" x2="932" y2="362.5" stroke="#778899"/><g><rect x="616" y="359" width="1" height="4" fill="#00ff00"/><rect x="614.5" y="359.5" width="4" height="3" fill="#fff" stroke="#00ff00"/><rect x="624" y="359" width="1" height="33" fill="#00ff00"/><rect x="622.5" y="359.5" width="4" height="22" fill="#fff" stroke="#00ff00"/><rect x="632" y="372" width="1" height="10" fill="#00ff00"/><rect x="630.5" y="375.5" width="4" height="3" fill="#000" stroke="#00ff00"/><rect x="640" y="356" width="1" height="23" fill="#00ff00"/><rect x="638.5" y="372.5" width="4" height="3" fill="#fff" stroke="#00ff00"/><rect x="648" y="378" width="1" height="11" fill="#00ff00"/><rect x="646.5" y="378.5" width="4" height="7" fill="#fff" stroke="#00ff00"/><rect x="656" y="381" width="1" height="14" fill="#00ff00"/><rect x="654.5" y="388.5" width="4" height="3" fill="#fff" stroke="#00ff00"/><rect x="664" y="349" width="1" height="46" fill="#00ff00"/><rect x="662.5" y="353.5" width="4" height="41" fill="#000" stroke="#00ff00"/><rect x="672" y="349" width="1" height="33" fill="#00ff00"/><rect x="670.5" y="349.5" width="4" height="29" fill="#fff" stroke="#00ff00"/><rect x="680" y="375" width="1" height="14" fill="#00ff00"/><rect x="678" y="381" width="5" height="1" fill="#00ff00"/><rect x="688" y="381" width="1" height="18" fill="#00ff00"/><rect x="686.5" y="385.5" width="4" height="3" fill="#fff" stroke="#00ff00"/><rect x="696" y="362" width="1" height="30" fill="#00ff00"/><rect x="694.5" y="372.5" width="4" height="19" fill="#000" stroke="#00ff00"/><rect x="704" y="369" width="1" height="10" fill="#00ff00"/><rect x="702.5" y="369.5" width="4" height="9" fill="#fff" stroke="#00ff00"/><rect x="712" y="356" width="1" height="23" fill="#00ff00"/><rect x="710.5" y="369.5" width="4" height="6" fill="#000" stroke="#00ff00"/><rect x="720" y="369" width="1" height="23" fill="#00ff00"/><rect x="718.5" y="372.5" width="4" height="9" fill="#fff" stroke="#00ff00"/><rect x="728" y="372" width="1" height="10" fill="#00ff00"/><rect x="726.5" y="372.5" width="4" height="6" fill="#000" stroke="#00ff00"/><rect x="736" y="372" width="1" height="7" fill="#00ff00"/><rect x="734.5" y="375.5" width="4" height="3" fill="#fff" stroke="#00ff00"/><rect x="744" y="375" width="1" height="12" fill="#00ff00"/><rect x="742" y="381" width="5" height="1" fill="#00ff00"/><rect x="752" y="381" width="1" height="18" fill="#00ff00"/><rect x="750.5" y="385.5" width="4" height="13" fill="#fff" stroke="#00ff00"/><rect x="760" y="398" width="1" height="33" fill="#00ff00"/><rect x="758.5" y="401.5" width="4" height="22" fill="#fff" stroke="#00ff00"/><rect x="768" y="414" width="1" height="13" fill="#00ff00"/><rect x="766.5" y="414.5" width="4" height="12" fill="#000" stroke="#00ff00"/><rect x="776" y="394" width="1" height="24" fill="#00ff00"/><rect x="774.5" y="407.5" width="4" height="10" fill="#000" stroke="#00ff00"/><rect x="784" y="394" width="1" height="27" fill="#00ff00"/><rect x="782.5" y="398.5" width="4" height="12" fill="#000" stroke="#00ff00"/><rect x="792" y="362" width="1" height="33" fill="#00ff00"/><rect x="790.5" y="372.5" width="4" height="22" fill="#000" stroke="#00ff00"/><rect x="800" y="372" width="1" height="10" fill="#00ff00"/><rect x="798" y="375" width="5" height="1" fill="#00ff00"/><rect x="808" y="372" width="1" height="10" fill="#00ff00"/><rect x="806.5" y="375.5" width="4" height="3" fill="#000" stroke="#00ff00"/><rect x="816" y="365" width="1" height="21" fill="#00ff00"/><rect x="814.5" y="378.5" width="4" height="7" fill="#fff" stroke="#00ff00"/><rect x="824" y="378" width="1" height="17" fill="#00ff00"/><rect x="822.5" y="381.5" width="4" height="7" fill="#000" stroke="#00ff00"/><rect x="832" y="378" width="1" height="14" fill="#00ff00"/><rect x="830" y="385" width="5" height="1" fill="#00ff00"/><rect x="840" y="385" width="1" height="10" fill="#00ff00"/><rect x="838.5" y="388.5" width="4" height="3" fill="#fff" stroke="#00ff00"/><rect x="848" y="381" width="1" height="14" fill="#00ff00"/><rect x="846.5" y="385.5" width="4" height="9" fill="#000" stroke="#00ff00"/><rect x="856" y="381" width="1" height="11" fill="#00ff00"/><rect x="854.5" y="381.5" width="4" height="4" fill="#fff" stroke="#00ff00"/><rect x="864" y="381" width="1" height="14" fill="#00ff00"/><rect x="862.5" y="388.5" width="4" height="3" fill="#fff" stroke="#00ff00"/><rect x="872" y="388" width="1" height="4" fill="#00ff00"/><rect x="870.5" y="388.5" width="4" height="3" fill="#fff" stroke="#00ff00"/><rect x="880" y="381" width="1" height="14" fill="#00ff00"/><rect x="878.5" y="385.5" width="4" height="3" fill="#000" stroke="#00ff00"/><rect x="888" y="369" width="1" height="20" fill="#00ff00"/><rect x="886.5" y="372.5" width="4" height="16" fill="#000" stroke="#00ff00"/><rect x="896" y="356" width="1" height="26" fill="#00ff00"/><rect x="894.5" y="362.5" width="4" height="13" fill="#000" stroke="#00ff00"/><rect x="904" y="349" width="1" height="14" fill="#00ff00"/><rect x="902.5" y="353.5" width="4" height="6" fill="#000" stroke="#00ff00"/><rect x="912" y="349" width="1" height="53" fill="#00ff00"/><rect x="910.5" y="356.5" width="4" height="6" fill="#fff" stroke="#00ff00"/></g><rect x="615.5" y="332.5" width="317" height="130" fill="none" stroke="#fff"/><rect x="933" y="350" width="3" height="1" fill="#fff"/><rect x="933" y="398" width="3" height="1" fill="#fff"/><rect x="933" y="446" width="3" height="1" fill="#fff"/><rect x="616" y="463" width="1" height="3" fill="#fff"/><rect x="680" y="463" width="1" height="3" fill="#fff"/><rect x="744" y="463" width="1" height="3" fill="#fff"/><rect x="808" y="463" width="1" height="3" fill="#fff"/><rect x="872" y="463" width="1" height="3" fill="#fff"/></svg>
<div class="t " style="left:621px;top:336.00px;font-size:10px;line-height:10px;color:#fff;transform:scaleX(0.93);transform-origin:0 0;background:#000;padding-right:1px;">GBPUSD,M15&nbsp;&nbsp;1.5203 1.5205 1.5189 1.5201</div>
<div class="t " style="left:938.5px;top:345.00px;font-size:9.6px;line-height:9.6px;color:#fff;transform:scaleX(0.95);transform-origin:0 0;">1.5205</div>
<div class="t " style="left:938.5px;top:393.00px;font-size:9.6px;line-height:9.6px;color:#fff;transform:scaleX(0.95);transform-origin:0 0;">1.5190</div>
<div class="t " style="left:938.5px;top:441.00px;font-size:9.6px;line-height:9.6px;color:#fff;transform:scaleX(0.95);transform-origin:0 0;">1.5175</div>
<div style="position:absolute;left:934px;top:356px;width:36px;height:11px;background:#fff;"></div>
<div class="t " style="left:938.5px;top:357.00px;font-size:9.6px;line-height:9.6px;color:#000;transform:scaleX(0.95);transform-origin:0 0;">1.5201</div>
<div class="t " style="left:615px;top:467.00px;font-size:9.6px;line-height:9.6px;color:#fff;transform:scaleX(0.96);transform-origin:0 0;">29 Mar 2013</div>
<div class="t " style="left:679px;top:467.00px;font-size:9.6px;line-height:9.6px;color:#fff;transform:scaleX(0.96);transform-origin:0 0;">29 Mar 16:30</div>
<div class="t " style="left:743px;top:467.00px;font-size:9.6px;line-height:9.6px;color:#fff;transform:scaleX(0.96);transform-origin:0 0;">29 Mar 18:30</div>
<div class="t " style="left:807px;top:467.00px;font-size:9.6px;line-height:9.6px;color:#fff;transform:scaleX(0.96);transform-origin:0 0;">29 Mar 20:30</div>
<div class="t " style="left:871px;top:467.00px;font-size:9.6px;line-height:9.6px;color:#fff;transform:scaleX(0.96);transform-origin:0 0;">29 Mar 22:30</div>
<div style="position:absolute;left:223px;top:491px;width:761px;height:22px;background:#f0f0f0;"></div>
<div style="position:absolute;left:223px;top:493px;width:761px;height:1px;background:#000;"></div>
<div style="position:absolute;left:226px;top:493px;width:88px;height:19px;box-sizing:border-box;border:1px solid #000;border-top:none;background:#fff;"></div>
<div class="t " style="left:237.2px;top:498.00px;font-size:10.4px;line-height:10.4px;color:#000;transform:scaleX(0.96);transform-origin:0 0;">EURUSD,M15</div>
<div class="t " style="left:325.9px;top:498.00px;font-size:10.4px;line-height:10.4px;color:#646a7a;transform:scaleX(0.96);transform-origin:0 0;">#AAPL,M15</div>
<div style="position:absolute;left:394px;top:497px;width:1px;height:11px;background:#808080;"></div>
<div class="t " style="left:404.5px;top:498.00px;font-size:10.4px;line-height:10.4px;color:#646a7a;transform:scaleX(0.96);transform-origin:0 0;">USDJPY,M15</div>
<div style="position:absolute;left:478px;top:497px;width:1px;height:11px;background:#808080;"></div>
<div class="t " style="left:487px;top:498.00px;font-size:10.4px;line-height:10.4px;color:#646a7a;transform:scaleX(0.96);transform-origin:0 0;">GBPUSD,M15</div>
<div style="position:absolute;left:562px;top:497px;width:1px;height:11px;background:#808080;"></div>
<svg style="position:absolute;left:955px;top:499px;" width="5" height="8" viewBox="0 0 5 8"><path d="M5 0 V8 L0 4 Z" fill="#a0a0a0"/></svg>
<svg style="position:absolute;left:972px;top:499px;" width="5" height="8" viewBox="0 0 5 8"><path d="M0 0 V8 L5 4 Z" fill="#a0a0a0"/></svg>
<div style="position:absolute;left:222px;top:512px;width:762px;height:1px;background:#a0a0a0;"></div>
<div style="position:absolute;left:8px;top:513px;width:976px;height:1px;background:#fff;"></div>
<svg style="position:absolute;left:12px;top:520px;" width="7" height="6" viewBox="0 0 7 6"><path d="M0.8 0.5 L6.2 5.5 M6.2 0.5 L0.8 5.5" stroke="#000" stroke-width="1.5"/></svg>
<div style="position:absolute;left:9px;top:531px;width:13px;height:103px;background:linear-gradient(180deg,#dbe6f3 0%,#c9d9eb 50%,#bcd0e8 100%);"></div>
<div class="t" style="left:10px;top:633px;width:103px;height:13px;transform-origin:0 0;transform:rotate(-90deg);font-size:11px;line-height:13px;color:#4a5c74;padding-left:2px;">Terminal</div>
<div style="position:absolute;left:23px;top:517px;width:958px;height:97px;box-sizing:border-box;border:1px solid #a9a9a9;border-bottom:none;background:#fff;"></div>
<div style="position:absolute;left:24px;top:518px;width:940px;height:23px;background:linear-gradient(180deg,#ffffff 0%,#ffffff 40%,#f1f2f4 100%);"></div>
<div style="position:absolute;left:24px;top:541px;width:940px;height:1px;background:#d5d5d5;"></div>
<div style="position:absolute;left:173px;top:518px;width:1px;height:23px;background:#e3e3e3;"></div>
<div class="t " style="left:30.4px;top:525.00px;font-size:10.6px;line-height:10.6px;color:#000;">Time</div>
<div class="t " style="left:180.7px;top:525.00px;font-size:10.6px;line-height:10.6px;color:#000;transform:scaleX(1.04);transform-origin:0 0;">Headline</div>
<div style="position:absolute;left:24px;top:542px;width:940px;height:71px;overflow:hidden;">
<div style="position:absolute;left:0;top:0px;width:940px;height:20px;background:#ebebeb;box-shadow:inset 0 -1px 0 #dcdcdc;"></div>
<div style="position:absolute;left:149px;top:0px;width:1px;height:20px;background:#d9d9d9;"></div>
<svg style="position:absolute;left:5px;top:4px" width="12" height="12" viewBox="0 0 12 12"><rect x="0.5" y="0.5" width="11" height="11" rx="1.5" fill="#f5cf3c" stroke="#c19a16"/><path d="M3 3.5 H7 M3 5.5 H9 M3 7.5 H9" stroke="#9c7a10"/></svg>
<div class="t" style="left:22.3px;top:5.0px;font-size:10.6px;line-height:10.6px;color:#000;transform:scaleX(1.03);transform-origin:0 0;">2013/03/29 21:13:19</div>
<div class="t" style="left:154.5px;top:5.0px;font-size:10.6px;line-height:10.6px;color:#000;transform:scaleX(1.017);transform-origin:0 0;">UPDATE: Tokyo Gas To Buy 25% Stake in Texas Shale Gas Project</div>
<div style="position:absolute;left:0;top:20px;width:940px;height:20px;background:#ffffff;box-shadow:inset 0 -1px 0 #dcdcdc;"></div>
<div style="position:absolute;left:149px;top:20px;width:1px;height:20px;background:#d9d9d9;"></div>
<svg style="position:absolute;left:5px;top:24px" width="12" height="12" viewBox="0 0 12 12"><rect x="0.5" y="0.5" width="11" height="11" rx="1.5" fill="#f5cf3c" stroke="#c19a16"/><path d="M3 3.5 H7 M3 5.5 H9 M3 7.5 H9" stroke="#9c7a10"/></svg>
<div class="t" style="left:22.3px;top:25.0px;font-size:10.6px;line-height:10.6px;color:#000;transform:scaleX(1.03);transform-origin:0 0;">2013/03/29 21:13:18</div>
<div class="t" style="left:154.5px;top:25.0px;font-size:10.6px;line-height:10.6px;color:#000;transform:scaleX(1.017);transform-origin:0 0;">PRESS RELEASE: S&amp;P Lowers Rtg To 'BBB-' On Harris Cnty MUD #217, TX Debt</div>
<div style="position:absolute;left:0;top:40px;width:940px;height:20px;background:#ebebeb;box-shadow:inset 0 -1px 0 #dcdcdc;"></div>
<div style="position:absolute;left:149px;top:40px;width:1px;height:20px;background:#d9d9d9;"></div>
<svg style="position:absolute;left:5px;top:44px" width="12" height="12" viewBox="0 0 12 12"><rect x="0.5" y="0.5" width="11" height="11" rx="1.5" fill="#f5cf3c" stroke="#c19a16"/><path d="M3 3.5 H7 M3 5.5 H9 M3 7.5 H9" stroke="#9c7a10"/></svg>
<div class="t" style="left:22.3px;top:45.0px;font-size:10.6px;line-height:10.6px;color:#000;transform:scaleX(1.03);transform-origin:0 0;">2013/03/29 21:13:17</div>
<div class="t" style="left:154.5px;top:45.0px;font-size:10.6px;line-height:10.6px;color:#000;transform:scaleX(1.017);transform-origin:0 0;">S&amp;P Lowers Rtg To 'BBB-' On Harris Cnty MUD #217, TX Debt</div>
<div style="position:absolute;left:0;top:60px;width:940px;height:20px;background:#ffffff;box-shadow:inset 0 -1px 0 #dcdcdc;"></div>
<div style="position:absolute;left:149px;top:60px;width:1px;height:20px;background:#d9d9d9;"></div>
<svg style="position:absolute;left:5px;top:64px" width="12" height="12" viewBox="0 0 12 12"><rect x="0.5" y="0.5" width="11" height="11" rx="1.5" fill="#f5cf3c" stroke="#c19a16"/><path d="M3 3.5 H7 M3 5.5 H9 M3 7.5 H9" stroke="#9c7a10"/></svg>
<div class="t" style="left:22.3px;top:65.0px;font-size:10.6px;line-height:10.6px;color:#000;transform:scaleX(1.03);transform-origin:0 0;">2013/03/29 21:13:15</div>
<div class="t" style="left:154.5px;top:65.0px;font-size:10.6px;line-height:10.6px;color:#000;transform:scaleX(1.017);transform-origin:0 0;">PRESS RELEASE: S&amp;P Take Various Actions On Six Small Basket Transactions</div>
</div>
<div style="position:absolute;left:964px;top:518px;width:16px;height:95px;background:#f0f0f0;"></div>
<svg style="position:absolute;left:968px;top:524px;" width="7" height="4" viewBox="0 0 7 4"><path d="M0 4 L3.5 0 L7 4 Z" fill="#333"/></svg>
<div style="position:absolute;left:964px;top:536px;width:15px;height:15px;box-sizing:border-box;border:1px solid #a2a2a2;border-radius:2px;background:linear-gradient(90deg,#f4f4f4,#e2e2e2);"></div>
<svg style="position:absolute;left:968px;top:603px;" width="7" height="4" viewBox="0 0 7 4"><path d="M0 0 L3.5 4 L7 0 Z" fill="#333"/></svg>
<div style="position:absolute;left:23px;top:613px;width:958px;height:20px;background:#f0f0f0;"></div>
<div style="position:absolute;left:23px;top:613px;width:958px;height:1px;background:#000;"></div>
<div style="position:absolute;left:170px;top:613px;width:46px;height:18px;box-sizing:border-box;border:1px solid #000;border-top:none;background:#fff;"></div>
<div class="t " style="left:35.8px;top:618.00px;font-size:10.6px;line-height:10.6px;color:#74808e;">Trade</div>
<div style="position:absolute;left:74px;top:618px;width:1px;height:11px;background:#808080;"></div>
<div class="t " style="left:83.9px;top:618.00px;font-size:10.6px;line-height:10.6px;color:#74808e;">Account History</div>
<div class="t " style="left:179.3px;top:617.00px;font-size:10.6px;line-height:10.6px;color:#000;">News</div>
<div class="t " style="left:226px;top:618.00px;font-size:10.6px;line-height:10.6px;color:#74808e;">Alerts</div>
<div style="position:absolute;left:264px;top:618px;width:1px;height:11px;background:#808080;"></div>
<div class="t " style="left:273.4px;top:618.00px;font-size:10.6px;line-height:10.6px;color:#74808e;">Mailbox</div>
<div style="position:absolute;left:320px;top:618px;width:1px;height:11px;background:#808080;"></div>
<div class="t " style="left:330.5px;top:618.00px;font-size:10.6px;line-height:10.6px;color:#74808e;">Journal</div>
<div style="position:absolute;left:375px;top:618px;width:1px;height:11px;background:#808080;"></div>
<div style="position:absolute;left:23px;top:633px;width:958px;height:1px;background:#fff;"></div>
<div style="position:absolute;left:8px;top:636px;width:976px;height:1px;background:#a0a0a0;"></div>
<div style="position:absolute;left:8px;top:637px;width:976px;height:1px;background:#fff;"></div>
<div class="t " style="left:10px;top:644.00px;font-size:10.9px;line-height:10.9px;color:#000;transform:scaleX(1.02);transform-origin:0 0;">For Help, press F1</div>
<div style="position:absolute;left:257px;top:640px;width:1px;height:17px;background:#a0a0a0;"></div>
<div style="position:absolute;left:374px;top:640px;width:1px;height:17px;background:#a0a0a0;"></div>
<div style="position:absolute;left:477px;top:640px;width:1px;height:17px;background:#a0a0a0;"></div>
<div style="position:absolute;left:547px;top:640px;width:1px;height:17px;background:#a0a0a0;"></div>
<div style="position:absolute;left:617px;top:640px;width:1px;height:17px;background:#a0a0a0;"></div>
<div style="position:absolute;left:687px;top:640px;width:1px;height:17px;background:#a0a0a0;"></div>
<div style="position:absolute;left:756px;top:640px;width:1px;height:17px;background:#a0a0a0;"></div>
<div style="position:absolute;left:822px;top:640px;width:1px;height:17px;background:#a0a0a0;"></div>
<div class="t " style="left:263px;top:644.00px;font-size:10.9px;line-height:10.9px;color:#000;transform:scaleX(1.03);transform-origin:0 0;">IFX One Click Trading</div>
<svg style="position:absolute;left:826px;top:643px;" width="26" height="12" viewBox="0 0 26 12"><rect x="2" y="0" width="2" height="12" fill="#6f8f1e"/><rect x="2" y="10" width="2" height="2" fill="#1d3d6e"/><rect x="2" y="9" width="2" height="1" fill="#f0f0f0"/><rect x="5" y="0" width="2" height="12" fill="#6f8f1e"/><rect x="5" y="9" width="2" height="3" fill="#1d3d6e"/><rect x="5" y="8" width="2" height="1" fill="#f0f0f0"/><rect x="8" y="0" width="2" height="12" fill="#6f8f1e"/><rect x="8" y="8" width="2" height="4" fill="#1d3d6e"/><rect x="8" y="7" width="2" height="1" fill="#f0f0f0"/><rect x="11" y="0" width="2" height="12" fill="#6f8f1e"/><rect x="11" y="7" width="2" height="5" fill="#1d3d6e"/><rect x="11" y="6" width="2" height="1" fill="#f0f0f0"/><rect x="14" y="0" width="2" height="12" fill="#6f8f1e"/><rect x="14" y="6" width="2" height="6" fill="#1d3d6e"/><rect x="14" y="5" width="2" height="1" fill="#f0f0f0"/><rect x="17" y="0" width="2" height="12" fill="#6f8f1e"/><rect x="17" y="5" width="2" height="7" fill="#1d3d6e"/><rect x="17" y="4" width="2" height="1" fill="#f0f0f0"/><rect x="20" y="0" width="2" height="12" fill="#6f8f1e"/><rect x="20" y="4" width="2" height="8" fill="#1d3d6e"/><rect x="20" y="3" width="2" height="1" fill="#f0f0f0"/><rect x="23" y="0" width="2" height="12" fill="#6f8f1e"/><rect x="23" y="3" width="2" height="9" fill="#1d3d6e"/><rect x="23" y="2" width="2" height="1" fill="#f0f0f0"/></svg>
<div class="t " style="left:890px;top:644.00px;font-size:11.2px;line-height:11.2px;color:#000;transform:scaleX(1.03);transform-origin:0 0;">40/3 kb</div>
<svg style="position:absolute;left:972px;top:646px;" width="12" height="12" viewBox="0 0 12 12"><path d="M12 -1 L-1 12 M12 3 L3 12 M12 7 L7 12 M12 11 L11 12" stroke="#fff" stroke-width="1.6"/><path d="M12 1 L1 12 M12 5 L5 12 M12 9 L9 12" stroke="#8a8a8a" stroke-width="1.4"/></svg>
</div></body></html>
